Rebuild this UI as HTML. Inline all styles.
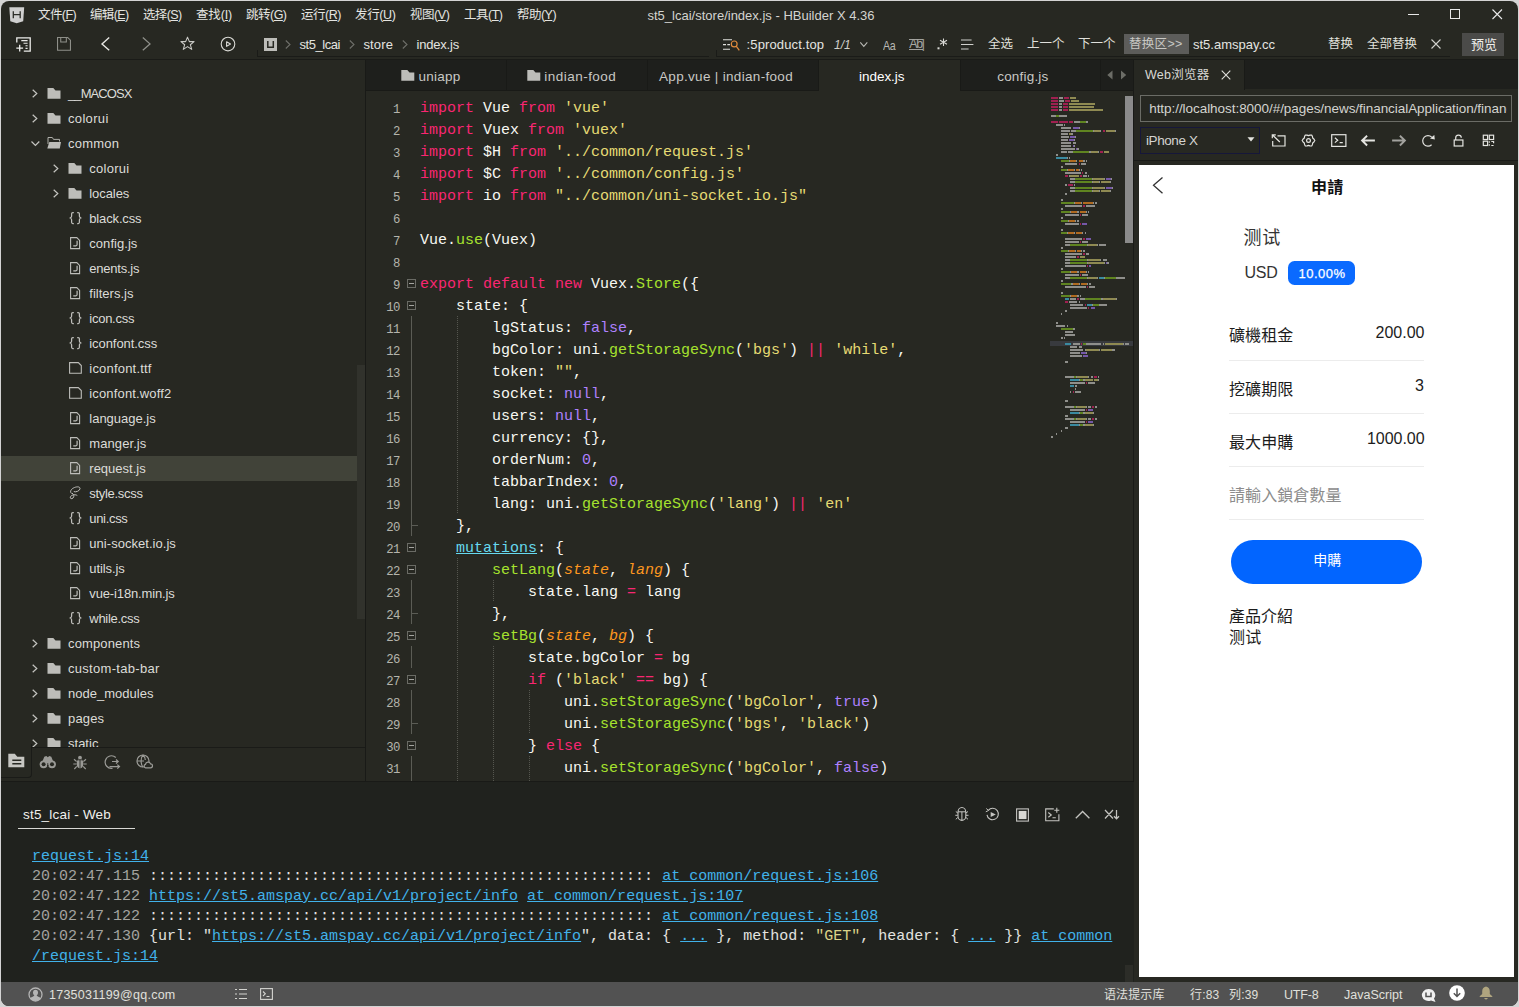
<!DOCTYPE html>
<html lang="zh"><head><meta charset="utf-8"><title>st5_lcai/store/index.js - HBuilder X 4.36</title>
<style>
*{box-sizing:border-box;margin:0;padding:0}
html,body{width:1519px;height:1007px;overflow:hidden;background:#d4d4d4}
body{font-family:"Liberation Sans","Noto Sans CJK SC",sans-serif;font-size:13px;color:#d4d4d0;position:relative}
.abs,.abs *{position:absolute}
#win{position:absolute;left:1px;top:1px;width:1517px;height:1004.5px;background:#272822;border-radius:8px;overflow:hidden}
.t{position:absolute;white-space:pre;line-height:1}
.ui{font-size:13px;color:#d6d6d2}
.mono{font-family:"Liberation Mono","DejaVu Sans Mono",monospace}
svg{position:absolute;overflow:visible}
</style></head>
<body>
<div id="win"><div style="position:absolute;left:-1px;top:-1px;width:1519px;height:1007px">
<div style="position:absolute;left:0px;top:59px;width:1519px;height:1px;background:#1a1b18;"></div>
<div style="position:absolute;left:366px;top:60px;width:768px;height:30px;background:#1e1f1c;"></div>
<div style="position:absolute;left:366px;top:90px;width:768px;height:1px;background:#191a17;"></div>
<div style="position:absolute;left:365px;top:60px;width:1px;height:722px;background:#191a17;"></div>
<div style="position:absolute;left:1133px;top:60px;width:1px;height:922px;background:#191a17;"></div>
<div style="position:absolute;left:1134px;top:60px;width:385px;height:30px;background:#1e1f1c;"></div>
<div style="position:absolute;left:0px;top:781px;width:1134px;height:1px;background:#191a17;"></div>
<div style="position:absolute;left:0px;top:782px;width:1134px;height:200px;background:#20221e;"></div>
<div style="position:absolute;left:0px;top:982px;width:1519px;height:25px;background:#525252;"></div>

<!-- sec_1_top.py -->
<svg style="left:9px;top:7px" width="16" height="17" viewBox="0 0 16 17"><path d="M0.300 0.300H15.200L14.200 14.300L7.700 16.300L1.300 14.300Z" fill="#cfcfcf"/><path d="M4.300 4.200V11.200M11.200 4.200V11.200M4.300 7.700H11.200" stroke="#2b2c27" stroke-width="1.300" fill="none"/></svg>
<div class="t " style="left:38px;top:9.2px;font-size:12.5px;height:12.5px;color:#e4e4e0;;letter-spacing:-0.597px;">文件(<span style="text-decoration:underline;position:static">F</span>)</div>
<div class="t " style="left:90px;top:9.2px;font-size:12.5px;height:12.5px;color:#e4e4e0;;letter-spacing:-0.637px;">编辑(<span style="text-decoration:underline;position:static">E</span>)</div>
<div class="t " style="left:143px;top:9.2px;font-size:12.5px;height:12.5px;color:#e4e4e0;;letter-spacing:-0.637px;">选择(<span style="text-decoration:underline;position:static">S</span>)</div>
<div class="t " style="left:196px;top:9.2px;font-size:12.5px;height:12.5px;color:#e4e4e0;;letter-spacing:-0.166px;">查找(<span style="text-decoration:underline;position:static">I</span>)</div>
<div class="t " style="left:246px;top:9.2px;font-size:12.5px;height:12.5px;color:#e4e4e0;;letter-spacing:-0.516px;">跳转(<span style="text-decoration:underline;position:static">G</span>)</div>
<div class="t " style="left:301px;top:9.2px;font-size:12.5px;height:12.5px;color:#e4e4e0;;letter-spacing:-0.475px;">运行(<span style="text-decoration:underline;position:static">R</span>)</div>
<div class="t " style="left:355px;top:9.2px;font-size:12.5px;height:12.5px;color:#e4e4e0;;letter-spacing:-0.375px;">发行(<span style="text-decoration:underline;position:static">U</span>)</div>
<div class="t " style="left:410px;top:9.2px;font-size:12.5px;height:12.5px;color:#e4e4e0;;letter-spacing:-0.438px;">视图(<span style="text-decoration:underline;position:static">V</span>)</div>
<div class="t " style="left:464px;top:9.2px;font-size:12.5px;height:12.5px;color:#e4e4e0;;letter-spacing:-0.497px;">工具(<span style="text-decoration:underline;position:static">T</span>)</div>
<div class="t " style="left:517px;top:9.2px;font-size:12.5px;height:12.5px;color:#e4e4e0;;letter-spacing:-0.537px;">帮助(<span style="text-decoration:underline;position:static">Y</span>)</div>
<div class="t " style="left:647.5px;top:8.5px;font-size:13px;height:13px;color:#d4d4d0;;letter-spacing:0.003px;">st5_lcai/store/index.js - HBuilder X 4.36</div>
<svg style="left:1408px;top:8px" width="12" height="12"><path d="M0 6.5H11" stroke="#e8e8e8" stroke-width="1"/></svg>
<svg style="left:1450px;top:9px" width="11" height="11"><rect x="0.5" y="0.5" width="9" height="9" fill="none" stroke="#e8e8e8" stroke-width="1"/></svg>
<svg style="left:1492px;top:9px" width="11" height="11"><path d="M0.5 0.5L10 10M10 0.5L0.5 10" stroke="#e8e8e8" stroke-width="1.1"/></svg>
<svg style="left:15.500px;top:36.500px" width="15" height="15" viewBox="0 0 15 15" fill="none" stroke="#ececea" stroke-width="1.300"><path d="M0.800 5.500V0.800H14.200V14.200H7.800"/><path d="M5.300 3.600H11.600M7.500 6.200H11.600M9.500 8.800H11.600M9.500 11.400H11.600" stroke-width="1.100"/><path d="M3.700 7.800V14.600M0.300 11.200H7.100"/></svg>
<svg style="left:57px;top:37.200px" width="14" height="13.800" viewBox="0 0 15 15" preserveAspectRatio="none" fill="none" stroke="#8e8f89" stroke-width="1.150"><path d="M0.600 0.600H11.500L14.400 3.500V14.400H0.600Z"/><path d="M4 0.600V5.500H10V0.600"/></svg>
<svg style="left:100.500px;top:37.200px" width="9" height="13.800" viewBox="0 0 9 14" preserveAspectRatio="none" fill="none" stroke="#e6e6e2" stroke-width="1.400"><path d="M8.200 0.500L1 7L8.200 13.500"/></svg>
<svg style="left:141.600px;top:37.200px" width="9" height="13.800" viewBox="0 0 9 14" preserveAspectRatio="none" fill="none" stroke="#8e8f89" stroke-width="1.300"><path d="M0.800 0.500L8 7L0.800 13.500"/></svg>
<svg style="left:179.500px;top:36px" width="15" height="15" viewBox="0 0 16 16" fill="none" stroke="#c8c8c4" stroke-width="1.150" stroke-linejoin="round"><path d="M8 1.200L10 6H15L11 9.300L12.500 14.300L8 11.300L3.500 14.300L5 9.300L1 6H6Z"/></svg>
<svg style="left:220px;top:36px" width="16" height="16" viewBox="0 0 16 16" fill="none" stroke="#d8d8d4" stroke-width="1.100"><circle cx="8" cy="8.050" r="6.800"/><path d="M6.600 5.700L10.500 8.050L6.600 10.400Z" stroke-linejoin="round"/></svg>
<div style="position:absolute;left:257px;top:50px;width:1px;height:7px;background:#1a1b18;"></div>
<div style="position:absolute;left:257px;top:56px;width:452px;height:1px;background:#1a1b18;"></div>
<svg style="left:264px;top:38px" width="13" height="13" viewBox="0 0 13 13"><rect x="0" y="0" width="13" height="13" fill="#bdbdb9"/><path d="M3.800 3V9.300H9.300V3" fill="none" stroke="#272822" stroke-width="1.5"/></svg>
<svg style="left:285px;top:40px" width="6" height="9" viewBox="0 0 6 9" fill="none" stroke="#6e6f69" stroke-width="1.1"><path d="M0.8 0.5L5 4.5L0.8 8.500"/></svg>
<svg style="left:349px;top:40px" width="6" height="9" viewBox="0 0 6 9" fill="none" stroke="#6e6f69" stroke-width="1.1"><path d="M0.8 0.5L5 4.5L0.8 8.500"/></svg>
<svg style="left:402px;top:40px" width="6" height="9" viewBox="0 0 6 9" fill="none" stroke="#6e6f69" stroke-width="1.1"><path d="M0.8 0.5L5 4.5L0.8 8.500"/></svg>
<div class="t " style="left:299.5px;top:37.7px;font-size:13px;height:13px;color:#e4e4e0;;letter-spacing:-0.447px;">st5_lcai</div>
<div class="t " style="left:363.5px;top:37.7px;font-size:13px;height:13px;color:#e4e4e0;;letter-spacing:0.119px;">store</div>
<div class="t " style="left:416.5px;top:37.7px;font-size:13px;height:13px;color:#e4e4e0;;letter-spacing:-0.197px;">index.js</div>
<div style="position:absolute;left:716px;top:50px;width:1px;height:7px;background:#1a1b18;"></div>
<div style="position:absolute;left:716px;top:56px;width:734px;height:1px;background:#1a1b18;"></div>
<svg style="left:722px;top:38px" width="18" height="13" viewBox="0 0 18 13" fill="none"><path d="M1 1.800H10M1 6.600H4M5.300 6.600H8M1 11.200H8" stroke="#e0e0dc" stroke-width="1.100"/><circle cx="12.200" cy="5.900" r="2.900" stroke="#e08a3c" stroke-width="1.200"/><path d="M14.200 8.200L17.300 12.300" stroke="#e08a3c" stroke-width="1.300"/></svg>
<div class="t " style="left:746.6px;top:38.0px;font-size:13px;height:13px;color:#e4e4e0;;letter-spacing:0.124px;">:5product.top</div>
<div class="t " style="left:834px;top:38.5px;font-size:12px;height:12px;color:#d0d0cc;font-style:italic;">1/1</div>
<svg style="left:859.800px;top:42px" width="8" height="5" viewBox="0 0 8 5" fill="none" stroke="#b8b8b4" stroke-width="1.100"><path d="M0.300 0.300L3.800 4.300L7.300 0.300"/></svg>
<div class="t " style="left:883px;top:38.5px;font-size:13px;height:13px;color:#b8b8b4;letter-spacing:-0.5px;transform:scaleX(.82);transform-origin:0 50%;">Aa</div>
<div style="position:absolute;left:909px;top:38.5px;width:13.5px;height:1px;background:#a0a09c;"></div>
<div style="position:absolute;left:909px;top:49px;width:13.5px;height:1px;background:#a0a09c;"></div>
<div class="t " style="left:909.3px;top:38.4px;font-size:12.3px;height:12.3px;color:#a8a8a4;letter-spacing:-1.250px;">Ab|</div>
<svg style="left:937px;top:38px" width="11" height="13" viewBox="0 0 11 13" fill="none" stroke="#d8d8d4" stroke-width="1.100"><path d="M6.500 0.500V8M3 2.300L10 6.200M10 2.300L3 6.200"/><rect x="0.500" y="9.300" width="2" height="2" fill="#d8d8d4" stroke="none"/></svg>
<svg style="left:961.200px;top:38.800px" width="14" height="11" viewBox="0 0 14 11" fill="none" stroke="#d0d0cc" stroke-width="1.200"><path d="M0 1H10.600M0 5.500H12.400M0 10H7.600"/></svg>
<div class="t " style="left:988px;top:38.2px;font-size:12.5px;height:12.5px;color:#e0e0dc;;">全选</div>
<div class="t " style="left:1027px;top:38.2px;font-size:12.5px;height:12.5px;color:#e0e0dc;;">上一个</div>
<div class="t " style="left:1078px;top:38.2px;font-size:12.5px;height:12.5px;color:#e0e0dc;;">下一个</div>
<div style="position:absolute;left:1124px;top:34px;width:65px;height:20px;background:#5c5c5a;"></div>
<div class="t " style="left:1129px;top:38.2px;font-size:12.5px;height:12.5px;color:#c8c8c4;letter-spacing:0.3px;">替换区&gt;&gt;</div>
<div class="t " style="left:1193px;top:38.0px;font-size:13px;height:13px;color:#e4e4e0;;">st5.amspay.cc</div>
<div class="t " style="left:1328px;top:38.2px;font-size:12.5px;height:12.5px;color:#e0e0dc;;">替换</div>
<div class="t " style="left:1367px;top:38.2px;font-size:12.5px;height:12.5px;color:#e0e0dc;;">全部替换</div>
<svg style="left:1431px;top:39px" width="10" height="10" viewBox="0 0 10 10"><path d="M0.5 0.5L9.500 9.500M9.500 0.5L0.5 9.500" stroke="#d0d0cc" stroke-width="1.1"/></svg>
<div style="position:absolute;left:1462px;top:33px;width:42px;height:23px;background:#4b4b49;"></div>
<div class="t " style="left:1471px;top:38.0px;font-size:13px;height:13px;color:#f0f0ec;;">预览</div>
<!-- sec_2_sidebar.py -->
<div style="position:absolute;left:1px;top:456px;width:356px;height:25px;background:#414339;"></div>
<div style="position:absolute;left:357px;top:365px;width:8px;height:254px;background:#31322c;"></div>
<div style="position:absolute;left:0;top:60px;width:365px;height:687px;overflow:hidden"><div style="position:absolute;left:0;top:-60px">
<svg style="left:32px;top:88.5px" width="6" height="9" viewBox="0 0 6 9" fill="none" stroke="#c4c4c0" stroke-width="1.2"><path d="M0.700 0.700L4.800 4.500L0.700 8.300"/></svg>
<svg style="left:47px;top:88.0px" width="14" height="11" viewBox="0 0 14 11"><path d="M0.500 0H6.300L8.500 2.400H13.500V10.800H0.500Z" fill="#bdbdb9"/></svg>
<div class="t " style="left:68px;top:87.0px;font-size:13px;height:13px;color:#dcdcd8;;letter-spacing:-0.902px;">__MACOSX</div>
<svg style="left:32px;top:113.5px" width="6" height="9" viewBox="0 0 6 9" fill="none" stroke="#c4c4c0" stroke-width="1.2"><path d="M0.700 0.700L4.800 4.500L0.700 8.300"/></svg>
<svg style="left:47px;top:113.0px" width="14" height="11" viewBox="0 0 14 11"><path d="M0.500 0H6.300L8.500 2.400H13.500V10.800H0.500Z" fill="#bdbdb9"/></svg>
<div class="t " style="left:68px;top:112.0px;font-size:13px;height:13px;color:#dcdcd8;;letter-spacing:0.329px;">colorui</div>
<svg style="left:31px;top:141.0px" width="9" height="6" viewBox="0 0 9 6" fill="none" stroke="#c4c4c0" stroke-width="1.2"><path d="M0.500 0.500L4.400 4.500L8.300 0.500"/></svg>
<svg style="left:46.5px;top:137px" width="15" height="12" viewBox="0 0 15 12"><path d="M1 7V0.500H5.300L6.500 2.400H12.500V4.500" fill="none" stroke="#bdbdb9" stroke-width="0.9"/><path d="M2.300 5H14L12.800 11.500H0.300Z" fill="#bdbdb9"/></svg>
<div class="t " style="left:68px;top:137.0px;font-size:13px;height:13px;color:#dcdcd8;;letter-spacing:0.240px;">common</div>
<svg style="left:53px;top:163.5px" width="6" height="9" viewBox="0 0 6 9" fill="none" stroke="#c4c4c0" stroke-width="1.2"><path d="M0.700 0.700L4.800 4.500L0.700 8.300"/></svg>
<svg style="left:68px;top:163.0px" width="14" height="11" viewBox="0 0 14 11"><path d="M0.500 0H6.300L8.500 2.400H13.500V10.800H0.500Z" fill="#bdbdb9"/></svg>
<div class="t " style="left:89.3px;top:162.0px;font-size:13px;height:13px;color:#dcdcd8;;letter-spacing:0.258px;">colorui</div>
<svg style="left:53px;top:188.5px" width="6" height="9" viewBox="0 0 6 9" fill="none" stroke="#c4c4c0" stroke-width="1.2"><path d="M0.700 0.700L4.800 4.500L0.700 8.300"/></svg>
<svg style="left:68px;top:188.0px" width="14" height="11" viewBox="0 0 14 11"><path d="M0.500 0H6.300L8.500 2.400H13.500V10.800H0.500Z" fill="#bdbdb9"/></svg>
<div class="t " style="left:89.3px;top:187.0px;font-size:13px;height:13px;color:#dcdcd8;;letter-spacing:-0.081px;">locales</div>
<svg style="left:68.5px;top:212px" width="13" height="12" viewBox="0 0 13 12" fill="none" stroke="#bdbdb9" stroke-width="1.250"><path d="M4.800 0.500H3.800Q2.600 0.500 2.600 1.700V4.300Q2.600 5.800 0.600 6Q2.600 6.200 2.600 7.700V10.300Q2.600 11.500 3.800 11.500H4.800"/><path d="M8.200 0.500H9.200Q10.400 0.500 10.400 1.700V4.300Q10.400 5.800 12.400 6Q10.400 6.200 10.400 7.700V10.300Q10.400 11.500 9.200 11.500H8.200"/></svg>
<div class="t " style="left:89.3px;top:212.0px;font-size:13px;height:13px;color:#dcdcd8;;letter-spacing:-0.152px;">black.css</div>
<svg style="left:69.5px;top:237.25px" width="11" height="13" viewBox="0 0 11 13" fill="none" stroke="#bdbdb9" stroke-width="1.100"><path d="M0.600 0.600H6.800L9.600 3.400V11.600H0.600Z"/><path d="M7.100 3.800V7.600Q7.100 8.800 5.900 8.800H3.300" stroke-width="1.200"/></svg>
<div class="t " style="left:89.3px;top:237.0px;font-size:13px;height:13px;color:#dcdcd8;;letter-spacing:0.044px;">config.js</div>
<svg style="left:69.5px;top:262.25px" width="11" height="13" viewBox="0 0 11 13" fill="none" stroke="#bdbdb9" stroke-width="1.100"><path d="M0.600 0.600H6.800L9.600 3.400V11.600H0.600Z"/><path d="M7.100 3.800V7.600Q7.100 8.800 5.900 8.800H3.300" stroke-width="1.200"/></svg>
<div class="t " style="left:89.3px;top:262.0px;font-size:13px;height:13px;color:#dcdcd8;;letter-spacing:-0.239px;">enents.js</div>
<svg style="left:69.5px;top:287.25px" width="11" height="13" viewBox="0 0 11 13" fill="none" stroke="#bdbdb9" stroke-width="1.100"><path d="M0.600 0.600H6.800L9.600 3.400V11.600H0.600Z"/><path d="M7.100 3.800V7.600Q7.100 8.800 5.900 8.800H3.300" stroke-width="1.200"/></svg>
<div class="t " style="left:89.3px;top:287.0px;font-size:13px;height:13px;color:#dcdcd8;;letter-spacing:0.014px;">filters.js</div>
<svg style="left:68.5px;top:312px" width="13" height="12" viewBox="0 0 13 12" fill="none" stroke="#bdbdb9" stroke-width="1.250"><path d="M4.800 0.500H3.800Q2.600 0.500 2.600 1.700V4.300Q2.600 5.800 0.600 6Q2.600 6.200 2.600 7.700V10.300Q2.600 11.500 3.800 11.500H4.800"/><path d="M8.200 0.500H9.200Q10.400 0.500 10.400 1.700V4.300Q10.400 5.800 12.400 6Q10.400 6.200 10.400 7.700V10.300Q10.400 11.500 9.200 11.500H8.200"/></svg>
<div class="t " style="left:89.3px;top:312.0px;font-size:13px;height:13px;color:#dcdcd8;;letter-spacing:-0.259px;">icon.css</div>
<svg style="left:68.5px;top:337px" width="13" height="12" viewBox="0 0 13 12" fill="none" stroke="#bdbdb9" stroke-width="1.250"><path d="M4.800 0.500H3.800Q2.600 0.500 2.600 1.700V4.300Q2.600 5.800 0.600 6Q2.600 6.200 2.600 7.700V10.300Q2.600 11.500 3.800 11.500H4.800"/><path d="M8.200 0.500H9.200Q10.400 0.500 10.400 1.700V4.300Q10.400 5.800 12.400 6Q10.400 6.200 10.400 7.700V10.300Q10.400 11.500 9.200 11.500H8.200"/></svg>
<div class="t " style="left:89.3px;top:337.0px;font-size:13px;height:13px;color:#dcdcd8;;letter-spacing:-0.071px;">iconfont.css</div>
<svg style="left:68.5px;top:362.2px" width="13" height="12" viewBox="0 0 13 12" fill="none" stroke="#bdbdb9" stroke-width="1.1"><path d="M0.600 0.600H9.300L12.300 3.600V11.300H0.600Z"/></svg>
<div class="t " style="left:89.3px;top:362.0px;font-size:13px;height:13px;color:#dcdcd8;;letter-spacing:0.201px;">iconfont.ttf</div>
<svg style="left:68.5px;top:387.2px" width="13" height="12" viewBox="0 0 13 12" fill="none" stroke="#bdbdb9" stroke-width="1.1"><path d="M0.600 0.600H9.300L12.300 3.600V11.300H0.600Z"/></svg>
<div class="t " style="left:89.3px;top:387.0px;font-size:13px;height:13px;color:#dcdcd8;;letter-spacing:0.151px;">iconfont.woff2</div>
<svg style="left:69.5px;top:412.25px" width="11" height="13" viewBox="0 0 11 13" fill="none" stroke="#bdbdb9" stroke-width="1.100"><path d="M0.600 0.600H6.800L9.600 3.400V11.600H0.600Z"/><path d="M7.100 3.800V7.600Q7.100 8.800 5.900 8.800H3.300" stroke-width="1.200"/></svg>
<div class="t " style="left:89.3px;top:412.0px;font-size:13px;height:13px;color:#dcdcd8;;letter-spacing:-0.009px;">language.js</div>
<svg style="left:69.5px;top:437.25px" width="11" height="13" viewBox="0 0 11 13" fill="none" stroke="#bdbdb9" stroke-width="1.100"><path d="M0.600 0.600H6.800L9.600 3.400V11.600H0.600Z"/><path d="M7.100 3.800V7.600Q7.100 8.800 5.900 8.800H3.300" stroke-width="1.200"/></svg>
<div class="t " style="left:89.3px;top:437.0px;font-size:13px;height:13px;color:#dcdcd8;;letter-spacing:0.081px;">manger.js</div>
<svg style="left:69.5px;top:462.25px" width="11" height="13" viewBox="0 0 11 13" fill="none" stroke="#bdbdb9" stroke-width="1.100"><path d="M0.600 0.600H6.800L9.600 3.400V11.600H0.600Z"/><path d="M7.100 3.800V7.600Q7.100 8.800 5.900 8.800H3.300" stroke-width="1.200"/></svg>
<div class="t " style="left:89.3px;top:462.0px;font-size:13px;height:13px;color:#dcdcd8;;letter-spacing:0.002px;">request.js</div>
<svg style="left:69px;top:486px" width="13" height="14" viewBox="0 0 13 14" fill="none" stroke="#bdbdb9" stroke-width="1"><path d="M2.500 7.500C0.500 5.500 2 3 5.500 1.500C8.500 0.300 11.300 0.800 11 2.800C10.700 4.800 7 6.500 4.800 5.600M3 7C5 8.500 5.500 10.500 4 12C2.800 13.200 1 12.800 1.300 11.200C1.700 9.300 5.500 7.800 8.300 9.500"/></svg>
<div class="t " style="left:89.3px;top:487.0px;font-size:13px;height:13px;color:#dcdcd8;;letter-spacing:-0.304px;">style.scss</div>
<svg style="left:68.5px;top:512px" width="13" height="12" viewBox="0 0 13 12" fill="none" stroke="#bdbdb9" stroke-width="1.250"><path d="M4.800 0.500H3.800Q2.600 0.500 2.600 1.700V4.300Q2.600 5.800 0.600 6Q2.600 6.200 2.600 7.700V10.300Q2.600 11.500 3.800 11.500H4.800"/><path d="M8.200 0.500H9.200Q10.400 0.500 10.400 1.700V4.300Q10.400 5.800 12.400 6Q10.400 6.200 10.400 7.700V10.300Q10.400 11.500 9.200 11.500H8.200"/></svg>
<div class="t " style="left:89.3px;top:512.0px;font-size:13px;height:13px;color:#dcdcd8;;letter-spacing:-0.324px;">uni.css</div>
<svg style="left:69.5px;top:537.25px" width="11" height="13" viewBox="0 0 11 13" fill="none" stroke="#bdbdb9" stroke-width="1.100"><path d="M0.600 0.600H6.800L9.600 3.400V11.600H0.600Z"/><path d="M7.100 3.800V7.600Q7.100 8.800 5.900 8.800H3.300" stroke-width="1.200"/></svg>
<div class="t " style="left:89.3px;top:537.0px;font-size:13px;height:13px;color:#dcdcd8;;letter-spacing:0.038px;">uni-socket.io.js</div>
<svg style="left:69.5px;top:562.25px" width="11" height="13" viewBox="0 0 11 13" fill="none" stroke="#bdbdb9" stroke-width="1.100"><path d="M0.600 0.600H6.800L9.600 3.400V11.600H0.600Z"/><path d="M7.100 3.800V7.600Q7.100 8.800 5.900 8.800H3.300" stroke-width="1.200"/></svg>
<div class="t " style="left:89.3px;top:562.0px;font-size:13px;height:13px;color:#dcdcd8;;letter-spacing:-0.078px;">utils.js</div>
<svg style="left:69.5px;top:587.25px" width="11" height="13" viewBox="0 0 11 13" fill="none" stroke="#bdbdb9" stroke-width="1.100"><path d="M0.600 0.600H6.800L9.600 3.400V11.600H0.600Z"/><path d="M7.100 3.800V7.600Q7.100 8.800 5.900 8.800H3.300" stroke-width="1.200"/></svg>
<div class="t " style="left:89.3px;top:587.0px;font-size:13px;height:13px;color:#dcdcd8;;letter-spacing:-0.136px;">vue-i18n.min.js</div>
<svg style="left:68.5px;top:612px" width="13" height="12" viewBox="0 0 13 12" fill="none" stroke="#bdbdb9" stroke-width="1.250"><path d="M4.800 0.500H3.800Q2.600 0.500 2.600 1.700V4.300Q2.600 5.800 0.600 6Q2.600 6.200 2.600 7.700V10.300Q2.600 11.500 3.800 11.500H4.800"/><path d="M8.200 0.500H9.200Q10.400 0.500 10.400 1.700V4.300Q10.400 5.800 12.400 6Q10.400 6.200 10.400 7.700V10.300Q10.400 11.500 9.200 11.500H8.200"/></svg>
<div class="t " style="left:89.3px;top:612.0px;font-size:13px;height:13px;color:#dcdcd8;;letter-spacing:-0.283px;">while.css</div>
<svg style="left:32px;top:638.5px" width="6" height="9" viewBox="0 0 6 9" fill="none" stroke="#c4c4c0" stroke-width="1.2"><path d="M0.700 0.700L4.800 4.500L0.700 8.300"/></svg>
<svg style="left:47px;top:638.0px" width="14" height="11" viewBox="0 0 14 11"><path d="M0.500 0H6.300L8.500 2.400H13.500V10.800H0.500Z" fill="#bdbdb9"/></svg>
<div class="t " style="left:68px;top:637.0px;font-size:13px;height:13px;color:#dcdcd8;;letter-spacing:0.137px;">components</div>
<svg style="left:32px;top:663.5px" width="6" height="9" viewBox="0 0 6 9" fill="none" stroke="#c4c4c0" stroke-width="1.2"><path d="M0.700 0.700L4.800 4.500L0.700 8.300"/></svg>
<svg style="left:47px;top:663.0px" width="14" height="11" viewBox="0 0 14 11"><path d="M0.500 0H6.300L8.500 2.400H13.500V10.800H0.500Z" fill="#bdbdb9"/></svg>
<div class="t " style="left:68px;top:662.0px;font-size:13px;height:13px;color:#dcdcd8;;letter-spacing:0.298px;">custom-tab-bar</div>
<svg style="left:32px;top:688.5px" width="6" height="9" viewBox="0 0 6 9" fill="none" stroke="#c4c4c0" stroke-width="1.2"><path d="M0.700 0.700L4.800 4.500L0.700 8.300"/></svg>
<svg style="left:47px;top:688.0px" width="14" height="11" viewBox="0 0 14 11"><path d="M0.500 0H6.300L8.500 2.400H13.500V10.800H0.500Z" fill="#bdbdb9"/></svg>
<div class="t " style="left:68px;top:687.0px;font-size:13px;height:13px;color:#dcdcd8;;letter-spacing:0.009px;">node_modules</div>
<svg style="left:32px;top:713.5px" width="6" height="9" viewBox="0 0 6 9" fill="none" stroke="#c4c4c0" stroke-width="1.2"><path d="M0.700 0.700L4.800 4.500L0.700 8.300"/></svg>
<svg style="left:47px;top:713.0px" width="14" height="11" viewBox="0 0 14 11"><path d="M0.500 0H6.300L8.500 2.400H13.500V10.800H0.500Z" fill="#bdbdb9"/></svg>
<div class="t " style="left:68px;top:712.0px;font-size:13px;height:13px;color:#dcdcd8;;letter-spacing:0.156px;">pages</div>
<svg style="left:32px;top:738.5px" width="6" height="9" viewBox="0 0 6 9" fill="none" stroke="#c4c4c0" stroke-width="1.2"><path d="M0.700 0.700L4.800 4.500L0.700 8.300"/></svg>
<svg style="left:47px;top:738.0px" width="14" height="11" viewBox="0 0 14 11"><path d="M0.500 0H6.300L8.500 2.400H13.500V10.800H0.500Z" fill="#bdbdb9"/></svg>
<div class="t " style="left:68px;top:737.0px;font-size:13px;height:13px;color:#dcdcd8;;letter-spacing:0.009px;">static</div>
</div></div>
<div style="position:absolute;left:0px;top:747px;width:365px;height:1px;background:#1a1b18;"></div>
<div style="position:absolute;left:0px;top:748px;width:365px;height:33px;background:#272822;"></div>
<div style="position:absolute;left:1px;top:744px;width:31px;height:34px;background:#272822;border-right:1px solid #1a1b18;border-bottom:1px solid #1a1b18;border-radius:0 0 4px 0"></div>
<svg style="left:8px;top:753px" width="17" height="15" viewBox="0 0 17 15"><path d="M0.300 0.800H6.800L9.300 3.800H16.300V14.300H0.300Z" fill="#c6c6c2"/><path d="M4.300 7.300H13.300M4.300 10.800H13.300" stroke="#272822" stroke-width="1.5"/></svg>
<svg style="left:39px;top:755px" width="18" height="14" viewBox="0 0 18 14"><path d="M5.300 1.800L7.300 1L8.800 2.200L10.300 1L12.300 1.800L14.800 8H2.800Z" fill="#9a9a96"/><circle cx="4.600" cy="9.300" r="3.900" fill="#9a9a96"/><circle cx="13" cy="9.300" r="3.900" fill="#9a9a96"/><circle cx="4.600" cy="9.300" r="2" fill="#272822"/><circle cx="13" cy="9.300" r="2" fill="#272822"/><rect x="8.100" y="9.600" width="1.400" height="1.400" fill="#272822"/></svg>
<svg style="left:72px;top:754px" width="16" height="16" viewBox="0 0 16 16" fill="none" stroke="#9a9a96" stroke-width="1.150"><circle cx="8" cy="3.700" r="1.900" fill="#9a9a96" stroke="none"/><ellipse cx="8" cy="9.500" rx="3.300" ry="4.700" fill="#9a9a96" stroke="none"/><path d="M8 5.500V14" stroke="#272822" stroke-width="0.900"/><path d="M4.800 5.800H11.200" stroke="#272822" stroke-width="0.900"/><path d="M4.600 7.500L2 5.300M4.500 10H1.300M4.800 12.300L2.300 15M11.400 7.500L14 5.300M11.500 10H14.700M11.200 12.300L13.700 15"/></svg>
<svg style="left:104px;top:754px" width="17" height="15" viewBox="0 0 17 15" fill="none" stroke="#9a9a96" stroke-width="1.200"><path d="M11.800 3.500A6.300 6.300 0 1 0 8.500 14.300"/><path d="M8 7.500H14M12 5.500L14.200 7.500L12 9.500M5.500 12.600H15.300M13.300 10.600L15.500 12.600L13.300 14.600"/></svg>
<svg style="left:136px;top:754px" width="17" height="15" viewBox="0 0 17 15" fill="none" stroke="#9a9a96" stroke-width="1.2"><circle cx="7" cy="7" r="6"/><path d="M1 7H8M7 1C4.500 3.500 4.500 10.500 7 13M7 1C8.500 2.500 9.300 4.500 9.300 6"/><path d="M9.500 13.800H14.500A2 2 0 0 0 14.500 9.800A2.600 2.600 0 0 0 9.500 10.300A1.800 1.800 0 0 0 9.500 13.800Z" fill="#272822"/></svg>
<!-- sec_3_editor.py -->
<div style="position:absolute;left:506px;top:60px;width:1px;height:30px;background:#191a17;"></div>
<div style="position:absolute;left:647px;top:60px;width:1px;height:30px;background:#191a17;"></div>
<div style="position:absolute;left:818px;top:60px;width:1px;height:30px;background:#191a17;"></div>
<div style="position:absolute;left:1100px;top:60px;width:1px;height:30px;background:#191a17;"></div>
<div style="position:absolute;left:819px;top:60px;width:141px;height:31px;background:#272822;"></div>
<div style="position:absolute;left:960px;top:60px;width:1px;height:30px;background:#191a17;"></div>
<svg style="left:401px;top:70.0px" width="14" height="11" viewBox="0 0 14 11"><path d="M0.300 0H6.300L8.500 2.400H13.300V10.800H0.300Z" fill="#bdbdb9"/></svg>
<div class="t " style="left:418.5px;top:70.0px;font-size:13.5px;height:13.5px;color:#c8c8c4;;letter-spacing:0.242px;">uniapp</div>
<svg style="left:527px;top:70.0px" width="14" height="11" viewBox="0 0 14 11"><path d="M0.300 0H6.300L8.500 2.400H13.300V10.800H0.300Z" fill="#bdbdb9"/></svg>
<div class="t " style="left:544.3px;top:70.0px;font-size:13.5px;height:13.5px;color:#c8c8c4;;letter-spacing:0.472px;">indian-food</div>
<div class="t " style="left:659px;top:70.0px;font-size:13.5px;height:13.5px;color:#c8c8c4;;letter-spacing:0.316px;">App.vue | indian-food</div>
<div class="t " style="left:859px;top:70.0px;font-size:13.5px;height:13.5px;color:#ffffff;;letter-spacing:-0.035px;">index.js</div>
<div class="t " style="left:997.2px;top:70.0px;font-size:13.5px;height:13.5px;color:#c8c8c4;;letter-spacing:0.197px;">config.js</div>
<svg style="left:1107px;top:70px" width="20" height="10" viewBox="0 0 20 10"><path d="M5.500 0.500V9.500L0.300 5Z M14 0.500V9.500L19.200 5Z" fill="#6c6d67"/></svg>
<div style="position:absolute;left:366px;top:91px;width:767px;height:690px;overflow:hidden"><div style="position:absolute;left:-366px;top:-91px">
<div style="position:absolute;left:457px;top:316px;width:1px;height:198px;background:repeating-linear-gradient(to bottom,#55564f 0 1px,transparent 1px 2px)"></div>
<div style="position:absolute;left:457px;top:558px;width:1px;height:242px;background:repeating-linear-gradient(to bottom,#55564f 0 1px,transparent 1px 2px)"></div>
<div style="position:absolute;left:493px;top:580px;width:1px;height:22px;background:repeating-linear-gradient(to bottom,#55564f 0 1px,transparent 1px 2px)"></div>
<div style="position:absolute;left:493px;top:646px;width:1px;height:154px;background:repeating-linear-gradient(to bottom,#55564f 0 1px,transparent 1px 2px)"></div>
<div style="position:absolute;left:529px;top:690px;width:1px;height:44px;background:repeating-linear-gradient(to bottom,#55564f 0 1px,transparent 1px 2px)"></div>
<div style="position:absolute;left:529px;top:756px;width:1px;height:44px;background:repeating-linear-gradient(to bottom,#55564f 0 1px,transparent 1px 2px)"></div>
<div style="position:absolute;left:411px;top:316px;width:1px;height:22px;background:#5b5c55;"></div>
<div style="position:absolute;left:411px;top:338px;width:1px;height:22px;background:#5b5c55;"></div>
<div style="position:absolute;left:411px;top:360px;width:1px;height:22px;background:#5b5c55;"></div>
<div style="position:absolute;left:411px;top:382px;width:1px;height:22px;background:#5b5c55;"></div>
<div style="position:absolute;left:411px;top:404px;width:1px;height:22px;background:#5b5c55;"></div>
<div style="position:absolute;left:411px;top:426px;width:1px;height:22px;background:#5b5c55;"></div>
<div style="position:absolute;left:411px;top:448px;width:1px;height:22px;background:#5b5c55;"></div>
<div style="position:absolute;left:411px;top:470px;width:1px;height:22px;background:#5b5c55;"></div>
<div style="position:absolute;left:411px;top:492px;width:1px;height:22px;background:#5b5c55;"></div>
<div style="position:absolute;left:411px;top:514px;width:1px;height:22px;background:#5b5c55;"></div>
<div style="position:absolute;left:411px;top:580px;width:1px;height:22px;background:#5b5c55;"></div>
<div style="position:absolute;left:411px;top:602px;width:1px;height:22px;background:#5b5c55;"></div>
<div style="position:absolute;left:411px;top:646px;width:1px;height:22px;background:#5b5c55;"></div>
<div style="position:absolute;left:411px;top:690px;width:1px;height:22px;background:#5b5c55;"></div>
<div style="position:absolute;left:411px;top:712px;width:1px;height:22px;background:#5b5c55;"></div>
<div style="position:absolute;left:411px;top:756px;width:1px;height:22px;background:#5b5c55;"></div>
<div style="position:absolute;left:411px;top:778px;width:1px;height:22px;background:#5b5c55;"></div>
<div style="position:absolute;left:407px;top:279px;width:9px;height:9px;border:1px solid #6a6b65;background:#272822"></div>
<div style="position:absolute;left:409px;top:283px;width:5px;height:1px;background:#a4a4a0;"></div>
<div style="position:absolute;left:407px;top:301px;width:9px;height:9px;border:1px solid #6a6b65;background:#272822"></div>
<div style="position:absolute;left:409px;top:305px;width:5px;height:1px;background:#a4a4a0;"></div>
<div style="position:absolute;left:407px;top:543px;width:9px;height:9px;border:1px solid #6a6b65;background:#272822"></div>
<div style="position:absolute;left:409px;top:547px;width:5px;height:1px;background:#a4a4a0;"></div>
<div style="position:absolute;left:407px;top:565px;width:9px;height:9px;border:1px solid #6a6b65;background:#272822"></div>
<div style="position:absolute;left:409px;top:569px;width:5px;height:1px;background:#a4a4a0;"></div>
<div style="position:absolute;left:407px;top:631px;width:9px;height:9px;border:1px solid #6a6b65;background:#272822"></div>
<div style="position:absolute;left:409px;top:635px;width:5px;height:1px;background:#a4a4a0;"></div>
<div style="position:absolute;left:407px;top:675px;width:9px;height:9px;border:1px solid #6a6b65;background:#272822"></div>
<div style="position:absolute;left:409px;top:679px;width:5px;height:1px;background:#a4a4a0;"></div>
<div style="position:absolute;left:407px;top:741px;width:9px;height:9px;border:1px solid #6a6b65;background:#272822"></div>
<div style="position:absolute;left:409px;top:745px;width:5px;height:1px;background:#a4a4a0;"></div>
<div style="position:absolute;left:412px;top:525px;width:6px;height:1px;background:#5b5c55;"></div>
<div style="position:absolute;left:412px;top:613px;width:6px;height:1px;background:#5b5c55;"></div>
<div style="position:absolute;left:412px;top:723px;width:6px;height:1px;background:#5b5c55;"></div>
<div class="t mono" style="left:372px;width:28px;text-align:right;top:103.7px;font-size:12.300px;height:12px;letter-spacing:-0.450px;color:#b4b4ac">1</div>
<div class="t mono" style="left:420px;top:100px;font-size:15px;height:18px;line-height:18px;color:#f8f8f2"><span style="position:static;color:#f92672">import</span> Vue <span style="position:static;color:#f92672">from</span> <span style="position:static;color:#e6db74">&#x27;vue&#x27;</span></div>
<div class="t mono" style="left:372px;width:28px;text-align:right;top:125.7px;font-size:12.300px;height:12px;letter-spacing:-0.450px;color:#b4b4ac">2</div>
<div class="t mono" style="left:420px;top:122px;font-size:15px;height:18px;line-height:18px;color:#f8f8f2"><span style="position:static;color:#f92672">import</span> Vuex <span style="position:static;color:#f92672">from</span> <span style="position:static;color:#e6db74">&#x27;vuex&#x27;</span></div>
<div class="t mono" style="left:372px;width:28px;text-align:right;top:147.7px;font-size:12.300px;height:12px;letter-spacing:-0.450px;color:#b4b4ac">3</div>
<div class="t mono" style="left:420px;top:144px;font-size:15px;height:18px;line-height:18px;color:#f8f8f2"><span style="position:static;color:#f92672">import</span> $H <span style="position:static;color:#f92672">from</span> <span style="position:static;color:#e6db74">&#x27;../common/request.js&#x27;</span></div>
<div class="t mono" style="left:372px;width:28px;text-align:right;top:169.7px;font-size:12.300px;height:12px;letter-spacing:-0.450px;color:#b4b4ac">4</div>
<div class="t mono" style="left:420px;top:166px;font-size:15px;height:18px;line-height:18px;color:#f8f8f2"><span style="position:static;color:#f92672">import</span> $C <span style="position:static;color:#f92672">from</span> <span style="position:static;color:#e6db74">&#x27;../common/config.js&#x27;</span></div>
<div class="t mono" style="left:372px;width:28px;text-align:right;top:191.7px;font-size:12.300px;height:12px;letter-spacing:-0.450px;color:#b4b4ac">5</div>
<div class="t mono" style="left:420px;top:188px;font-size:15px;height:18px;line-height:18px;color:#f8f8f2"><span style="position:static;color:#f92672">import</span> io <span style="position:static;color:#f92672">from</span> <span style="position:static;color:#e6db74">&quot;../common/uni-socket.io.js&quot;</span></div>
<div class="t mono" style="left:372px;width:28px;text-align:right;top:213.7px;font-size:12.300px;height:12px;letter-spacing:-0.450px;color:#b4b4ac">6</div>
<div class="t mono" style="left:372px;width:28px;text-align:right;top:235.7px;font-size:12.300px;height:12px;letter-spacing:-0.450px;color:#b4b4ac">7</div>
<div class="t mono" style="left:420px;top:232px;font-size:15px;height:18px;line-height:18px;color:#f8f8f2">Vue.<span style="position:static;color:#a6e22e">use</span>(Vuex)</div>
<div class="t mono" style="left:372px;width:28px;text-align:right;top:257.7px;font-size:12.300px;height:12px;letter-spacing:-0.450px;color:#b4b4ac">8</div>
<div class="t mono" style="left:372px;width:28px;text-align:right;top:279.7px;font-size:12.300px;height:12px;letter-spacing:-0.450px;color:#b4b4ac">9</div>
<div class="t mono" style="left:420px;top:276px;font-size:15px;height:18px;line-height:18px;color:#f8f8f2"><span style="position:static;color:#f92672">export</span> <span style="position:static;color:#f92672">default</span> <span style="position:static;color:#f92672">new</span> Vuex.<span style="position:static;color:#a6e22e">Store</span>({</div>
<div class="t mono" style="left:372px;width:28px;text-align:right;top:301.7px;font-size:12.300px;height:12px;letter-spacing:-0.450px;color:#b4b4ac">10</div>
<div class="t mono" style="left:420px;top:298px;font-size:15px;height:18px;line-height:18px;color:#f8f8f2">    state: {</div>
<div class="t mono" style="left:372px;width:28px;text-align:right;top:323.7px;font-size:12.300px;height:12px;letter-spacing:-0.450px;color:#b4b4ac">11</div>
<div class="t mono" style="left:420px;top:320px;font-size:15px;height:18px;line-height:18px;color:#f8f8f2">        lgStatus: <span style="position:static;color:#ae81ff">false</span>,</div>
<div class="t mono" style="left:372px;width:28px;text-align:right;top:345.7px;font-size:12.300px;height:12px;letter-spacing:-0.450px;color:#b4b4ac">12</div>
<div class="t mono" style="left:420px;top:342px;font-size:15px;height:18px;line-height:18px;color:#f8f8f2">        bgColor: uni.<span style="position:static;color:#a6e22e">getStorageSync</span>(<span style="position:static;color:#e6db74">&#x27;bgs&#x27;</span>) <span style="position:static;color:#f92672">||</span> <span style="position:static;color:#e6db74">&#x27;while&#x27;</span>,</div>
<div class="t mono" style="left:372px;width:28px;text-align:right;top:367.7px;font-size:12.300px;height:12px;letter-spacing:-0.450px;color:#b4b4ac">13</div>
<div class="t mono" style="left:420px;top:364px;font-size:15px;height:18px;line-height:18px;color:#f8f8f2">        token: <span style="position:static;color:#e6db74">&quot;&quot;</span>,</div>
<div class="t mono" style="left:372px;width:28px;text-align:right;top:389.7px;font-size:12.300px;height:12px;letter-spacing:-0.450px;color:#b4b4ac">14</div>
<div class="t mono" style="left:420px;top:386px;font-size:15px;height:18px;line-height:18px;color:#f8f8f2">        socket: <span style="position:static;color:#ae81ff">null</span>,</div>
<div class="t mono" style="left:372px;width:28px;text-align:right;top:411.7px;font-size:12.300px;height:12px;letter-spacing:-0.450px;color:#b4b4ac">15</div>
<div class="t mono" style="left:420px;top:408px;font-size:15px;height:18px;line-height:18px;color:#f8f8f2">        users: <span style="position:static;color:#ae81ff">null</span>,</div>
<div class="t mono" style="left:372px;width:28px;text-align:right;top:433.7px;font-size:12.300px;height:12px;letter-spacing:-0.450px;color:#b4b4ac">16</div>
<div class="t mono" style="left:420px;top:430px;font-size:15px;height:18px;line-height:18px;color:#f8f8f2">        currency: {},</div>
<div class="t mono" style="left:372px;width:28px;text-align:right;top:455.7px;font-size:12.300px;height:12px;letter-spacing:-0.450px;color:#b4b4ac">17</div>
<div class="t mono" style="left:420px;top:452px;font-size:15px;height:18px;line-height:18px;color:#f8f8f2">        orderNum: <span style="position:static;color:#ae81ff">0</span>,</div>
<div class="t mono" style="left:372px;width:28px;text-align:right;top:477.7px;font-size:12.300px;height:12px;letter-spacing:-0.450px;color:#b4b4ac">18</div>
<div class="t mono" style="left:420px;top:474px;font-size:15px;height:18px;line-height:18px;color:#f8f8f2">        tabbarIndex: <span style="position:static;color:#ae81ff">0</span>,</div>
<div class="t mono" style="left:372px;width:28px;text-align:right;top:499.7px;font-size:12.300px;height:12px;letter-spacing:-0.450px;color:#b4b4ac">19</div>
<div class="t mono" style="left:420px;top:496px;font-size:15px;height:18px;line-height:18px;color:#f8f8f2">        lang: uni.<span style="position:static;color:#a6e22e">getStorageSync</span>(<span style="position:static;color:#e6db74">&#x27;lang&#x27;</span>) <span style="position:static;color:#f92672">||</span> <span style="position:static;color:#e6db74">&#x27;en&#x27;</span></div>
<div class="t mono" style="left:372px;width:28px;text-align:right;top:521.7px;font-size:12.300px;height:12px;letter-spacing:-0.450px;color:#b4b4ac">20</div>
<div class="t mono" style="left:420px;top:518px;font-size:15px;height:18px;line-height:18px;color:#f8f8f2">    },</div>
<div class="t mono" style="left:372px;width:28px;text-align:right;top:543.7px;font-size:12.300px;height:12px;letter-spacing:-0.450px;color:#b4b4ac">21</div>
<div class="t mono" style="left:420px;top:540px;font-size:15px;height:18px;line-height:18px;color:#f8f8f2">    <span style="position:static;color:#66d9ef;text-decoration:underline">mutations</span>: {</div>
<div class="t mono" style="left:372px;width:28px;text-align:right;top:565.7px;font-size:12.300px;height:12px;letter-spacing:-0.450px;color:#b4b4ac">22</div>
<div class="t mono" style="left:420px;top:562px;font-size:15px;height:18px;line-height:18px;color:#f8f8f2">        <span style="position:static;color:#a6e22e">setLang</span>(<span style="position:static;color:#fd971f;font-style:italic">state</span>, <span style="position:static;color:#fd971f;font-style:italic">lang</span>) {</div>
<div class="t mono" style="left:372px;width:28px;text-align:right;top:587.7px;font-size:12.300px;height:12px;letter-spacing:-0.450px;color:#b4b4ac">23</div>
<div class="t mono" style="left:420px;top:584px;font-size:15px;height:18px;line-height:18px;color:#f8f8f2">            state.lang <span style="position:static;color:#f92672">=</span> lang</div>
<div class="t mono" style="left:372px;width:28px;text-align:right;top:609.7px;font-size:12.300px;height:12px;letter-spacing:-0.450px;color:#b4b4ac">24</div>
<div class="t mono" style="left:420px;top:606px;font-size:15px;height:18px;line-height:18px;color:#f8f8f2">        },</div>
<div class="t mono" style="left:372px;width:28px;text-align:right;top:631.7px;font-size:12.300px;height:12px;letter-spacing:-0.450px;color:#b4b4ac">25</div>
<div class="t mono" style="left:420px;top:628px;font-size:15px;height:18px;line-height:18px;color:#f8f8f2">        <span style="position:static;color:#a6e22e">setBg</span>(<span style="position:static;color:#fd971f;font-style:italic">state</span>, <span style="position:static;color:#fd971f;font-style:italic">bg</span>) {</div>
<div class="t mono" style="left:372px;width:28px;text-align:right;top:653.7px;font-size:12.300px;height:12px;letter-spacing:-0.450px;color:#b4b4ac">26</div>
<div class="t mono" style="left:420px;top:650px;font-size:15px;height:18px;line-height:18px;color:#f8f8f2">            state.bgColor <span style="position:static;color:#f92672">=</span> bg</div>
<div class="t mono" style="left:372px;width:28px;text-align:right;top:675.7px;font-size:12.300px;height:12px;letter-spacing:-0.450px;color:#b4b4ac">27</div>
<div class="t mono" style="left:420px;top:672px;font-size:15px;height:18px;line-height:18px;color:#f8f8f2">            <span style="position:static;color:#f92672">if</span> (<span style="position:static;color:#e6db74">&#x27;black&#x27;</span> <span style="position:static;color:#f92672">==</span> bg) {</div>
<div class="t mono" style="left:372px;width:28px;text-align:right;top:697.7px;font-size:12.300px;height:12px;letter-spacing:-0.450px;color:#b4b4ac">28</div>
<div class="t mono" style="left:420px;top:694px;font-size:15px;height:18px;line-height:18px;color:#f8f8f2">                uni.<span style="position:static;color:#a6e22e">setStorageSync</span>(<span style="position:static;color:#e6db74">&#x27;bgColor&#x27;</span>, <span style="position:static;color:#ae81ff">true</span>)</div>
<div class="t mono" style="left:372px;width:28px;text-align:right;top:719.7px;font-size:12.300px;height:12px;letter-spacing:-0.450px;color:#b4b4ac">29</div>
<div class="t mono" style="left:420px;top:716px;font-size:15px;height:18px;line-height:18px;color:#f8f8f2">                uni.<span style="position:static;color:#a6e22e">setStorageSync</span>(<span style="position:static;color:#e6db74">&#x27;bgs&#x27;</span>, <span style="position:static;color:#e6db74">&#x27;black&#x27;</span>)</div>
<div class="t mono" style="left:372px;width:28px;text-align:right;top:741.7px;font-size:12.300px;height:12px;letter-spacing:-0.450px;color:#b4b4ac">30</div>
<div class="t mono" style="left:420px;top:738px;font-size:15px;height:18px;line-height:18px;color:#f8f8f2">            } <span style="position:static;color:#f92672">else</span> {</div>
<div class="t mono" style="left:372px;width:28px;text-align:right;top:763.7px;font-size:12.300px;height:12px;letter-spacing:-0.450px;color:#b4b4ac">31</div>
<div class="t mono" style="left:420px;top:760px;font-size:15px;height:18px;line-height:18px;color:#f8f8f2">                uni.<span style="position:static;color:#a6e22e">setStorageSync</span>(<span style="position:static;color:#e6db74">&#x27;bgColor&#x27;</span>, <span style="position:static;color:#ae81ff">false</span>)</div>
<div class="t mono" style="left:372px;width:28px;text-align:right;top:785.7px;font-size:12.300px;height:12px;letter-spacing:-0.450px;color:#b4b4ac">32</div>
<div class="t mono" style="left:420px;top:782px;font-size:15px;height:18px;line-height:18px;color:#f8f8f2">                uni.<span style="position:static;color:#a6e22e">setStorageSync</span>(<span style="position:static;color:#e6db74">&#x27;bgs&#x27;</span>, <span style="position:static;color:#e6db74">&#x27;while&#x27;</span>)</div>
</div></div>
<div style="position:absolute;left:1050px;top:341px;width:83px;height:5px;background:#383a3e;"></div>
<svg style="left:0;top:0" width="1134" height="460" viewBox="0 0 1134 460" shape-rendering="crispEdges"><rect x="1051.0" y="96.5" width="7.2" height="2" fill="#a02050"/><rect x="1059.4" y="96.5" width="3.6" height="2" fill="#8f8f8b"/><rect x="1064.2" y="96.5" width="4.8" height="2" fill="#a02050"/><rect x="1070.2" y="96.5" width="6.0" height="2" fill="#8f8a52"/><rect x="1051.0" y="99.5" width="7.2" height="2" fill="#a02050"/><rect x="1059.4" y="99.5" width="4.8" height="2" fill="#8f8f8b"/><rect x="1065.4" y="99.5" width="4.8" height="2" fill="#a02050"/><rect x="1071.4" y="99.5" width="7.2" height="2" fill="#8f8a52"/><rect x="1051.0" y="102.5" width="7.2" height="2" fill="#a02050"/><rect x="1059.4" y="102.5" width="2.4" height="2" fill="#8f8f8b"/><rect x="1063.0" y="102.5" width="4.8" height="2" fill="#a02050"/><rect x="1069.0" y="102.5" width="26.4" height="2" fill="#8f8a52"/><rect x="1051.0" y="105.5" width="7.2" height="2" fill="#a02050"/><rect x="1059.4" y="105.5" width="2.4" height="2" fill="#8f8f8b"/><rect x="1063.0" y="105.5" width="4.8" height="2" fill="#a02050"/><rect x="1069.0" y="105.5" width="25.2" height="2" fill="#8f8a52"/><rect x="1051.0" y="108.5" width="7.2" height="2" fill="#a02050"/><rect x="1059.4" y="108.5" width="2.4" height="2" fill="#8f8f8b"/><rect x="1063.0" y="108.5" width="4.8" height="2" fill="#a02050"/><rect x="1069.0" y="108.5" width="33.6" height="2" fill="#8f8a52"/><rect x="1051.0" y="114.5" width="4.8" height="2" fill="#8f8f8b"/><rect x="1055.8" y="114.5" width="3.6" height="2" fill="#5f8420"/><rect x="1059.4" y="114.5" width="7.2" height="2" fill="#8f8f8b"/><rect x="1051.0" y="120.5" width="7.2" height="2" fill="#a02050"/><rect x="1059.4" y="120.5" width="8.4" height="2" fill="#a02050"/><rect x="1069.0" y="120.5" width="3.6" height="2" fill="#a02050"/><rect x="1073.8" y="120.5" width="6.0" height="2" fill="#8f8f8b"/><rect x="1079.8" y="120.5" width="6.0" height="2" fill="#5f8420"/><rect x="1085.8" y="120.5" width="2.4" height="2" fill="#8f8f8b"/><rect x="1055.8" y="123.5" width="7.2" height="2" fill="#8f8f8b"/><rect x="1064.2" y="123.5" width="1.2" height="2" fill="#8f8f8b"/><rect x="1060.6" y="126.5" width="10.8" height="2" fill="#8f8f8b"/><rect x="1072.6" y="126.5" width="6.0" height="2" fill="#7558a8"/><rect x="1078.6" y="126.5" width="1.2" height="2" fill="#8f8f8b"/><rect x="1060.6" y="129.5" width="9.6" height="2" fill="#8f8f8b"/><rect x="1071.4" y="129.5" width="4.8" height="2" fill="#8f8f8b"/><rect x="1076.2" y="129.5" width="16.8" height="2" fill="#5f8420"/><rect x="1093.0" y="129.5" width="1.2" height="2" fill="#8f8f8b"/><rect x="1094.2" y="129.5" width="6.0" height="2" fill="#8f8a52"/><rect x="1100.2" y="129.5" width="1.2" height="2" fill="#8f8f8b"/><rect x="1102.6" y="129.5" width="2.4" height="2" fill="#a02050"/><rect x="1106.2" y="129.5" width="8.4" height="2" fill="#8f8a52"/><rect x="1114.6" y="129.5" width="1.2" height="2" fill="#8f8f8b"/><rect x="1060.6" y="132.5" width="7.2" height="2" fill="#8f8f8b"/><rect x="1069.0" y="132.5" width="2.4" height="2" fill="#8f8a52"/><rect x="1071.4" y="132.5" width="1.2" height="2" fill="#8f8f8b"/><rect x="1060.6" y="135.5" width="8.4" height="2" fill="#8f8f8b"/><rect x="1070.2" y="135.5" width="4.8" height="2" fill="#7558a8"/><rect x="1075.0" y="135.5" width="1.2" height="2" fill="#8f8f8b"/><rect x="1060.6" y="138.5" width="7.2" height="2" fill="#8f8f8b"/><rect x="1069.0" y="138.5" width="4.8" height="2" fill="#7558a8"/><rect x="1073.8" y="138.5" width="1.2" height="2" fill="#8f8f8b"/><rect x="1060.6" y="141.5" width="10.8" height="2" fill="#8f8f8b"/><rect x="1072.6" y="141.5" width="3.6" height="2" fill="#8f8f8b"/><rect x="1060.6" y="144.5" width="10.8" height="2" fill="#8f8f8b"/><rect x="1072.6" y="144.5" width="1.2" height="2" fill="#7558a8"/><rect x="1073.8" y="144.5" width="1.2" height="2" fill="#8f8f8b"/><rect x="1060.6" y="147.5" width="14.4" height="2" fill="#8f8f8b"/><rect x="1076.2" y="147.5" width="1.2" height="2" fill="#7558a8"/><rect x="1077.4" y="147.5" width="1.2" height="2" fill="#8f8f8b"/><rect x="1060.6" y="150.5" width="6.0" height="2" fill="#8f8f8b"/><rect x="1067.8" y="150.5" width="4.8" height="2" fill="#8f8f8b"/><rect x="1072.6" y="150.5" width="16.8" height="2" fill="#5f8420"/><rect x="1089.4" y="150.5" width="1.2" height="2" fill="#8f8f8b"/><rect x="1090.6" y="150.5" width="7.2" height="2" fill="#8f8a52"/><rect x="1097.8" y="150.5" width="1.2" height="2" fill="#8f8f8b"/><rect x="1100.2" y="150.5" width="2.4" height="2" fill="#a02050"/><rect x="1103.8" y="150.5" width="4.8" height="2" fill="#8f8a52"/><rect x="1055.8" y="153.5" width="2.4" height="2" fill="#8f8f8b"/><rect x="1055.8" y="156.5" width="10.8" height="2" fill="#3a8aa0"/><rect x="1066.6" y="156.5" width="1.2" height="2" fill="#8f8f8b"/><rect x="1069.0" y="156.5" width="1.2" height="2" fill="#8f8f8b"/><rect x="1060.6" y="159.5" width="8.4" height="2" fill="#5f8420"/><rect x="1069.0" y="159.5" width="1.2" height="2" fill="#8f8f8b"/><rect x="1070.2" y="159.5" width="6.0" height="2" fill="#b06a20"/><rect x="1076.2" y="159.5" width="1.2" height="2" fill="#8f8f8b"/><rect x="1078.6" y="159.5" width="4.8" height="2" fill="#b06a20"/><rect x="1083.4" y="159.5" width="1.2" height="2" fill="#8f8f8b"/><rect x="1085.8" y="159.5" width="1.2" height="2" fill="#8f8f8b"/><rect x="1065.4" y="162.5" width="12.0" height="2" fill="#8f8f8b"/><rect x="1078.6" y="162.5" width="1.2" height="2" fill="#a02050"/><rect x="1081.0" y="162.5" width="4.8" height="2" fill="#8f8f8b"/><rect x="1060.6" y="165.5" width="2.4" height="2" fill="#8f8f8b"/><rect x="1060.6" y="168.5" width="6.0" height="2" fill="#5f8420"/><rect x="1066.6" y="168.5" width="1.2" height="2" fill="#8f8f8b"/><rect x="1067.8" y="168.5" width="6.0" height="2" fill="#b06a20"/><rect x="1073.8" y="168.5" width="1.2" height="2" fill="#8f8f8b"/><rect x="1076.2" y="168.5" width="2.4" height="2" fill="#b06a20"/><rect x="1078.6" y="168.5" width="1.2" height="2" fill="#8f8f8b"/><rect x="1081.0" y="168.5" width="1.2" height="2" fill="#8f8f8b"/><rect x="1065.4" y="171.5" width="15.6" height="2" fill="#8f8f8b"/><rect x="1082.2" y="171.5" width="1.2" height="2" fill="#a02050"/><rect x="1084.6" y="171.5" width="2.4" height="2" fill="#8f8f8b"/><rect x="1065.4" y="174.5" width="2.4" height="2" fill="#a02050"/><rect x="1069.0" y="174.5" width="1.2" height="2" fill="#8f8f8b"/><rect x="1070.2" y="174.5" width="8.4" height="2" fill="#8f8a52"/><rect x="1079.8" y="174.5" width="2.4" height="2" fill="#a02050"/><rect x="1083.4" y="174.5" width="3.6" height="2" fill="#8f8f8b"/><rect x="1088.2" y="174.5" width="1.2" height="2" fill="#8f8f8b"/><rect x="1070.2" y="177.5" width="4.8" height="2" fill="#8f8f8b"/><rect x="1075.0" y="177.5" width="16.8" height="2" fill="#5f8420"/><rect x="1091.8" y="177.5" width="1.2" height="2" fill="#8f8f8b"/><rect x="1093.0" y="177.5" width="10.8" height="2" fill="#8f8a52"/><rect x="1103.8" y="177.5" width="1.2" height="2" fill="#8f8f8b"/><rect x="1106.2" y="177.5" width="4.8" height="2" fill="#7558a8"/><rect x="1111.0" y="177.5" width="1.2" height="2" fill="#8f8f8b"/><rect x="1070.2" y="180.5" width="4.8" height="2" fill="#8f8f8b"/><rect x="1075.0" y="180.5" width="16.8" height="2" fill="#5f8420"/><rect x="1091.8" y="180.5" width="1.2" height="2" fill="#8f8f8b"/><rect x="1093.0" y="180.5" width="6.0" height="2" fill="#8f8a52"/><rect x="1099.0" y="180.5" width="1.2" height="2" fill="#8f8f8b"/><rect x="1101.4" y="180.5" width="8.4" height="2" fill="#8f8a52"/><rect x="1109.8" y="180.5" width="1.2" height="2" fill="#8f8f8b"/><rect x="1065.4" y="183.5" width="1.2" height="2" fill="#8f8f8b"/><rect x="1067.8" y="183.5" width="4.8" height="2" fill="#a02050"/><rect x="1073.8" y="183.5" width="1.2" height="2" fill="#8f8f8b"/><rect x="1070.2" y="186.5" width="4.8" height="2" fill="#8f8f8b"/><rect x="1075.0" y="186.5" width="16.8" height="2" fill="#5f8420"/><rect x="1091.8" y="186.5" width="1.2" height="2" fill="#8f8f8b"/><rect x="1093.0" y="186.5" width="10.8" height="2" fill="#8f8a52"/><rect x="1103.8" y="186.5" width="1.2" height="2" fill="#8f8f8b"/><rect x="1106.2" y="186.5" width="6.0" height="2" fill="#7558a8"/><rect x="1112.2" y="186.5" width="1.2" height="2" fill="#8f8f8b"/><rect x="1070.2" y="189.5" width="4.8" height="2" fill="#8f8f8b"/><rect x="1075.0" y="189.5" width="16.8" height="2" fill="#5f8420"/><rect x="1091.8" y="189.5" width="1.2" height="2" fill="#8f8f8b"/><rect x="1093.0" y="189.5" width="6.0" height="2" fill="#8f8a52"/><rect x="1099.0" y="189.5" width="1.2" height="2" fill="#8f8f8b"/><rect x="1101.4" y="189.5" width="8.4" height="2" fill="#8f8a52"/><rect x="1109.8" y="189.5" width="1.2" height="2" fill="#8f8f8b"/><rect x="1065.4" y="192.5" width="1.2" height="2" fill="#8f8f8b"/><rect x="1060.6" y="198.5" width="2.4" height="2" fill="#8f8f8b"/><rect x="1060.6" y="201.5" width="13.2" height="2" fill="#5f8420"/><rect x="1073.8" y="201.5" width="1.2" height="2" fill="#8f8f8b"/><rect x="1075.0" y="201.5" width="6.0" height="2" fill="#b06a20"/><rect x="1081.0" y="201.5" width="1.2" height="2" fill="#8f8f8b"/><rect x="1083.4" y="201.5" width="9.6" height="2" fill="#b06a20"/><rect x="1093.0" y="201.5" width="1.2" height="2" fill="#8f8f8b"/><rect x="1095.4" y="201.5" width="1.2" height="2" fill="#8f8f8b"/><rect x="1065.4" y="204.5" width="16.8" height="2" fill="#8f8f8b"/><rect x="1083.4" y="204.5" width="1.2" height="2" fill="#a02050"/><rect x="1085.8" y="204.5" width="9.6" height="2" fill="#8f8f8b"/><rect x="1060.6" y="207.5" width="2.4" height="2" fill="#8f8f8b"/><rect x="1060.6" y="210.5" width="9.6" height="2" fill="#5f8420"/><rect x="1070.2" y="210.5" width="1.2" height="2" fill="#8f8f8b"/><rect x="1071.4" y="210.5" width="6.0" height="2" fill="#b06a20"/><rect x="1077.4" y="210.5" width="1.2" height="2" fill="#8f8f8b"/><rect x="1079.8" y="210.5" width="6.0" height="2" fill="#b06a20"/><rect x="1085.8" y="210.5" width="1.2" height="2" fill="#8f8f8b"/><rect x="1088.2" y="210.5" width="1.2" height="2" fill="#8f8f8b"/><rect x="1065.4" y="213.5" width="13.2" height="2" fill="#8f8f8b"/><rect x="1079.8" y="213.5" width="1.2" height="2" fill="#a02050"/><rect x="1082.2" y="213.5" width="6.0" height="2" fill="#8f8f8b"/><rect x="1060.6" y="216.5" width="2.4" height="2" fill="#8f8f8b"/><rect x="1060.6" y="219.5" width="7.2" height="2" fill="#5f8420"/><rect x="1067.8" y="219.5" width="1.2" height="2" fill="#8f8f8b"/><rect x="1069.0" y="219.5" width="6.0" height="2" fill="#b06a20"/><rect x="1075.0" y="219.5" width="1.2" height="2" fill="#8f8f8b"/><rect x="1077.4" y="219.5" width="1.2" height="2" fill="#8f8f8b"/><rect x="1065.4" y="222.5" width="13.2" height="2" fill="#8f8f8b"/><rect x="1079.8" y="222.5" width="1.2" height="2" fill="#a02050"/><rect x="1082.2" y="222.5" width="4.8" height="2" fill="#7558a8"/><rect x="1060.6" y="228.5" width="2.4" height="2" fill="#8f8f8b"/><rect x="1060.6" y="231.5" width="6.0" height="2" fill="#5f8420"/><rect x="1066.6" y="231.5" width="1.2" height="2" fill="#8f8f8b"/><rect x="1067.8" y="231.5" width="6.0" height="2" fill="#b06a20"/><rect x="1073.8" y="231.5" width="1.2" height="2" fill="#8f8f8b"/><rect x="1076.2" y="231.5" width="6.0" height="2" fill="#b06a20"/><rect x="1082.2" y="231.5" width="1.2" height="2" fill="#8f8f8b"/><rect x="1084.6" y="231.5" width="1.2" height="2" fill="#8f8f8b"/><rect x="1065.4" y="237.5" width="16.8" height="2" fill="#8f8f8b"/><rect x="1083.4" y="237.5" width="1.2" height="2" fill="#a02050"/><rect x="1085.8" y="237.5" width="4.8" height="2" fill="#7558a8"/><rect x="1065.4" y="240.5" width="13.2" height="2" fill="#8f8f8b"/><rect x="1079.8" y="240.5" width="1.2" height="2" fill="#a02050"/><rect x="1082.2" y="240.5" width="6.0" height="2" fill="#8f8f8b"/><rect x="1065.4" y="243.5" width="4.8" height="2" fill="#8f8f8b"/><rect x="1070.2" y="243.5" width="16.8" height="2" fill="#5f8420"/><rect x="1087.0" y="243.5" width="1.2" height="2" fill="#8f8f8b"/><rect x="1088.2" y="243.5" width="8.4" height="2" fill="#8f8a52"/><rect x="1096.6" y="243.5" width="1.2" height="2" fill="#8f8f8b"/><rect x="1099.0" y="243.5" width="7.2" height="2" fill="#8f8f8b"/><rect x="1060.6" y="246.5" width="2.4" height="2" fill="#8f8f8b"/><rect x="1060.6" y="249.5" width="7.2" height="2" fill="#5f8420"/><rect x="1067.8" y="249.5" width="1.2" height="2" fill="#8f8f8b"/><rect x="1069.0" y="249.5" width="6.0" height="2" fill="#b06a20"/><rect x="1075.0" y="249.5" width="1.2" height="2" fill="#8f8f8b"/><rect x="1077.4" y="249.5" width="3.6" height="2" fill="#b06a20"/><rect x="1081.0" y="249.5" width="1.2" height="2" fill="#8f8f8b"/><rect x="1083.4" y="249.5" width="1.2" height="2" fill="#8f8f8b"/><rect x="1065.4" y="252.5" width="16.8" height="2" fill="#8f8f8b"/><rect x="1083.4" y="252.5" width="1.2" height="2" fill="#a02050"/><rect x="1085.8" y="252.5" width="3.6" height="2" fill="#8f8f8b"/><rect x="1065.4" y="255.5" width="10.8" height="2" fill="#8f8f8b"/><rect x="1077.4" y="255.5" width="1.2" height="2" fill="#a02050"/><rect x="1079.8" y="255.5" width="4.8" height="2" fill="#8f8a52"/><rect x="1065.4" y="258.5" width="4.8" height="2" fill="#8f8f8b"/><rect x="1070.2" y="258.5" width="16.8" height="2" fill="#5f8420"/><rect x="1087.0" y="258.5" width="1.2" height="2" fill="#8f8f8b"/><rect x="1088.2" y="258.5" width="12.0" height="2" fill="#8f8a52"/><rect x="1100.2" y="258.5" width="1.2" height="2" fill="#8f8f8b"/><rect x="1102.6" y="258.5" width="4.8" height="2" fill="#8f8f8b"/><rect x="1065.4" y="261.5" width="4.8" height="2" fill="#8f8f8b"/><rect x="1070.2" y="261.5" width="16.8" height="2" fill="#5f8420"/><rect x="1087.0" y="261.5" width="1.2" height="2" fill="#8f8f8b"/><rect x="1088.2" y="261.5" width="15.6" height="2" fill="#8f8a52"/><rect x="1103.8" y="261.5" width="1.2" height="2" fill="#8f8f8b"/><rect x="1106.2" y="261.5" width="1.2" height="2" fill="#7558a8"/><rect x="1107.4" y="261.5" width="1.2" height="2" fill="#8f8f8b"/><rect x="1065.4" y="264.5" width="20.4" height="2" fill="#8f8f8b"/><rect x="1087.0" y="264.5" width="1.2" height="2" fill="#a02050"/><rect x="1089.4" y="264.5" width="1.2" height="2" fill="#7558a8"/><rect x="1060.6" y="267.5" width="2.4" height="2" fill="#8f8f8b"/><rect x="1060.6" y="270.5" width="9.6" height="2" fill="#5f8420"/><rect x="1070.2" y="270.5" width="1.2" height="2" fill="#8f8f8b"/><rect x="1071.4" y="270.5" width="6.0" height="2" fill="#b06a20"/><rect x="1077.4" y="270.5" width="1.2" height="2" fill="#8f8f8b"/><rect x="1079.8" y="270.5" width="6.0" height="2" fill="#b06a20"/><rect x="1085.8" y="270.5" width="1.2" height="2" fill="#8f8f8b"/><rect x="1088.2" y="270.5" width="1.2" height="2" fill="#8f8f8b"/><rect x="1065.4" y="273.5" width="13.2" height="2" fill="#8f8f8b"/><rect x="1079.8" y="273.5" width="1.2" height="2" fill="#a02050"/><rect x="1082.2" y="273.5" width="6.0" height="2" fill="#8f8f8b"/><rect x="1065.4" y="276.5" width="4.8" height="2" fill="#8f8f8b"/><rect x="1070.2" y="276.5" width="16.8" height="2" fill="#5f8420"/><rect x="1087.0" y="276.5" width="1.2" height="2" fill="#8f8f8b"/><rect x="1088.2" y="276.5" width="8.4" height="2" fill="#8f8a52"/><rect x="1096.6" y="276.5" width="1.2" height="2" fill="#8f8f8b"/><rect x="1099.0" y="276.5" width="4.8" height="2" fill="#3a8aa0"/><rect x="1103.8" y="276.5" width="1.2" height="2" fill="#8f8f8b"/><rect x="1105.0" y="276.5" width="10.8" height="2" fill="#5f8420"/><rect x="1115.8" y="276.5" width="9.6" height="2" fill="#8f8f8b"/><rect x="1060.6" y="279.5" width="2.4" height="2" fill="#8f8f8b"/><rect x="1060.6" y="282.5" width="10.8" height="2" fill="#5f8420"/><rect x="1071.4" y="282.5" width="1.2" height="2" fill="#8f8f8b"/><rect x="1072.6" y="282.5" width="6.0" height="2" fill="#b06a20"/><rect x="1078.6" y="282.5" width="1.2" height="2" fill="#8f8f8b"/><rect x="1081.0" y="282.5" width="6.0" height="2" fill="#b06a20"/><rect x="1087.0" y="282.5" width="1.2" height="2" fill="#8f8f8b"/><rect x="1089.4" y="282.5" width="1.2" height="2" fill="#8f8f8b"/><rect x="1065.4" y="285.5" width="20.4" height="2" fill="#8f8f8b"/><rect x="1087.0" y="285.5" width="1.2" height="2" fill="#a02050"/><rect x="1089.4" y="285.5" width="6.0" height="2" fill="#8f8f8b"/><rect x="1060.6" y="291.5" width="2.4" height="2" fill="#8f8f8b"/><rect x="1060.6" y="294.5" width="9.6" height="2" fill="#5f8420"/><rect x="1070.2" y="294.5" width="1.2" height="2" fill="#8f8f8b"/><rect x="1071.4" y="294.5" width="6.0" height="2" fill="#b06a20"/><rect x="1077.4" y="294.5" width="1.2" height="2" fill="#8f8f8b"/><rect x="1079.8" y="294.5" width="1.2" height="2" fill="#8f8f8b"/><rect x="1065.4" y="297.5" width="3.6" height="2" fill="#3a8aa0"/><rect x="1070.2" y="297.5" width="6.0" height="2" fill="#8f8f8b"/><rect x="1077.4" y="297.5" width="1.2" height="2" fill="#a02050"/><rect x="1079.8" y="297.5" width="4.8" height="2" fill="#8f8f8b"/><rect x="1084.6" y="297.5" width="16.8" height="2" fill="#5f8420"/><rect x="1101.4" y="297.5" width="1.2" height="2" fill="#8f8f8b"/><rect x="1102.6" y="297.5" width="13.2" height="2" fill="#8f8a52"/><rect x="1115.8" y="297.5" width="1.2" height="2" fill="#8f8f8b"/><rect x="1065.4" y="300.5" width="2.4" height="2" fill="#a02050"/><rect x="1069.0" y="300.5" width="8.4" height="2" fill="#8f8f8b"/><rect x="1078.6" y="300.5" width="1.2" height="2" fill="#8f8f8b"/><rect x="1070.2" y="303.5" width="13.2" height="2" fill="#8f8f8b"/><rect x="1084.6" y="303.5" width="1.2" height="2" fill="#a02050"/><rect x="1087.0" y="303.5" width="4.8" height="2" fill="#3a8aa0"/><rect x="1091.8" y="303.5" width="1.2" height="2" fill="#8f8f8b"/><rect x="1093.0" y="303.5" width="6.0" height="2" fill="#5f8420"/><rect x="1099.0" y="303.5" width="8.4" height="2" fill="#8f8f8b"/><rect x="1070.2" y="306.5" width="16.8" height="2" fill="#8f8f8b"/><rect x="1088.2" y="306.5" width="1.2" height="2" fill="#a02050"/><rect x="1090.6" y="306.5" width="4.8" height="2" fill="#7558a8"/><rect x="1065.4" y="309.5" width="1.2" height="2" fill="#8f8f8b"/><rect x="1060.6" y="312.5" width="1.2" height="2" fill="#8f8f8b"/><rect x="1055.8" y="321.5" width="2.4" height="2" fill="#8f8f8b"/><rect x="1055.8" y="324.5" width="9.6" height="2" fill="#8f8f8b"/><rect x="1066.6" y="324.5" width="1.2" height="2" fill="#8f8f8b"/><rect x="1060.6" y="327.5" width="12.0" height="2" fill="#5f8420"/><rect x="1072.6" y="327.5" width="2.4" height="2" fill="#8f8f8b"/><rect x="1065.4" y="330.5" width="7.2" height="2" fill="#8f8f8b"/><rect x="1065.4" y="333.5" width="9.6" height="2" fill="#8f8f8b"/><rect x="1060.6" y="336.5" width="2.4" height="2" fill="#8f8f8b"/><rect x="1064.2" y="336.5" width="1.2" height="2" fill="#8f8f8b"/><rect x="1065.4" y="342.5" width="6.0" height="2" fill="#3a8aa0"/><rect x="1072.6" y="342.5" width="7.2" height="2" fill="#8f8f8b"/><rect x="1081.0" y="342.5" width="1.2" height="2" fill="#a02050"/><rect x="1083.4" y="342.5" width="2.4" height="2" fill="#5f8420"/><rect x="1085.8" y="342.5" width="15.6" height="2" fill="#8f8f8b"/><rect x="1102.6" y="342.5" width="1.2" height="2" fill="#8f8f8b"/><rect x="1105.0" y="342.5" width="18.0" height="2" fill="#8f8a52"/><rect x="1123.0" y="342.5" width="1.2" height="2" fill="#8f8f8b"/><rect x="1125.4" y="342.5" width="3.6" height="2" fill="#8f8f8b"/><rect x="1070.2" y="345.5" width="7.2" height="2" fill="#8f8f8b"/><rect x="1078.6" y="345.5" width="3.6" height="2" fill="#8f8f8b"/><rect x="1070.2" y="348.5" width="13.2" height="2" fill="#8f8f8b"/><rect x="1084.6" y="348.5" width="1.2" height="2" fill="#8f8f8b"/><rect x="1085.8" y="348.5" width="13.2" height="2" fill="#8f8a52"/><rect x="1099.0" y="348.5" width="1.2" height="2" fill="#8f8f8b"/><rect x="1101.4" y="348.5" width="10.8" height="2" fill="#8f8a52"/><rect x="1112.2" y="348.5" width="2.4" height="2" fill="#8f8f8b"/><rect x="1070.2" y="351.5" width="9.6" height="2" fill="#8f8f8b"/><rect x="1081.0" y="351.5" width="4.8" height="2" fill="#7558a8"/><rect x="1085.8" y="351.5" width="1.2" height="2" fill="#8f8f8b"/><rect x="1070.2" y="354.5" width="12.0" height="2" fill="#8f8f8b"/><rect x="1083.4" y="354.5" width="4.8" height="2" fill="#7558a8"/><rect x="1065.4" y="360.5" width="2.4" height="2" fill="#8f8f8b"/><rect x="1065.4" y="375.5" width="8.4" height="2" fill="#8f8f8b"/><rect x="1073.8" y="375.5" width="2.4" height="2" fill="#5f8420"/><rect x="1076.2" y="375.5" width="1.2" height="2" fill="#8f8f8b"/><rect x="1077.4" y="375.5" width="10.8" height="2" fill="#8f8a52"/><rect x="1088.2" y="375.5" width="1.2" height="2" fill="#8f8f8b"/><rect x="1090.6" y="375.5" width="2.4" height="2" fill="#8f8f8b"/><rect x="1094.2" y="375.5" width="2.4" height="2" fill="#a02050"/><rect x="1097.8" y="375.5" width="1.2" height="2" fill="#8f8f8b"/><rect x="1070.2" y="378.5" width="8.4" height="2" fill="#3a8aa0"/><rect x="1078.6" y="378.5" width="1.2" height="2" fill="#8f8f8b"/><rect x="1079.8" y="378.5" width="3.6" height="2" fill="#5f8420"/><rect x="1083.4" y="378.5" width="1.2" height="2" fill="#8f8f8b"/><rect x="1084.6" y="378.5" width="8.4" height="2" fill="#8f8a52"/><rect x="1094.2" y="378.5" width="3.6" height="2" fill="#8f8a52"/><rect x="1097.8" y="378.5" width="1.2" height="2" fill="#8f8f8b"/><rect x="1070.2" y="381.5" width="14.4" height="2" fill="#8f8f8b"/><rect x="1085.8" y="381.5" width="1.2" height="2" fill="#a02050"/><rect x="1088.2" y="381.5" width="7.2" height="2" fill="#8f8f8b"/><rect x="1070.2" y="384.5" width="3.6" height="2" fill="#3a8aa0"/><rect x="1075.0" y="384.5" width="2.4" height="2" fill="#8f8f8b"/><rect x="1075.0" y="387.5" width="1.2" height="2" fill="#8f8f8b"/><rect x="1070.2" y="390.5" width="1.2" height="2" fill="#8f8f8b"/><rect x="1072.6" y="390.5" width="1.2" height="2" fill="#a02050"/><rect x="1075.0" y="390.5" width="6.0" height="2" fill="#8f8f8b"/><rect x="1065.4" y="399.5" width="2.4" height="2" fill="#8f8f8b"/><rect x="1065.4" y="405.5" width="8.4" height="2" fill="#8f8f8b"/><rect x="1073.8" y="405.5" width="2.4" height="2" fill="#5f8420"/><rect x="1076.2" y="405.5" width="1.2" height="2" fill="#8f8f8b"/><rect x="1077.4" y="405.5" width="8.4" height="2" fill="#8f8a52"/><rect x="1085.8" y="405.5" width="1.2" height="2" fill="#8f8f8b"/><rect x="1088.2" y="405.5" width="2.4" height="2" fill="#8f8f8b"/><rect x="1091.8" y="405.5" width="2.4" height="2" fill="#a02050"/><rect x="1095.4" y="405.5" width="1.2" height="2" fill="#8f8f8b"/><rect x="1070.2" y="408.5" width="14.4" height="2" fill="#8f8f8b"/><rect x="1085.8" y="408.5" width="1.2" height="2" fill="#a02050"/><rect x="1088.2" y="408.5" width="4.8" height="2" fill="#7558a8"/><rect x="1070.2" y="411.5" width="8.4" height="2" fill="#3a8aa0"/><rect x="1078.6" y="411.5" width="1.2" height="2" fill="#8f8f8b"/><rect x="1079.8" y="411.5" width="3.6" height="2" fill="#5f8420"/><rect x="1083.4" y="411.5" width="1.2" height="2" fill="#8f8f8b"/><rect x="1084.6" y="411.5" width="8.4" height="2" fill="#8f8a52"/><rect x="1093.0" y="411.5" width="1.2" height="2" fill="#8f8f8b"/><rect x="1065.4" y="414.5" width="2.4" height="2" fill="#8f8f8b"/><rect x="1065.4" y="417.5" width="8.4" height="2" fill="#8f8f8b"/><rect x="1073.8" y="417.5" width="2.4" height="2" fill="#5f8420"/><rect x="1076.2" y="417.5" width="1.2" height="2" fill="#8f8f8b"/><rect x="1077.4" y="417.5" width="8.4" height="2" fill="#8f8a52"/><rect x="1085.8" y="417.5" width="1.2" height="2" fill="#8f8f8b"/><rect x="1088.2" y="417.5" width="2.4" height="2" fill="#8f8f8b"/><rect x="1091.8" y="417.5" width="2.4" height="2" fill="#a02050"/><rect x="1095.4" y="417.5" width="1.2" height="2" fill="#8f8f8b"/><rect x="1070.2" y="420.5" width="14.4" height="2" fill="#8f8f8b"/><rect x="1085.8" y="420.5" width="1.2" height="2" fill="#a02050"/><rect x="1088.2" y="420.5" width="4.8" height="2" fill="#7558a8"/><rect x="1070.2" y="423.5" width="8.4" height="2" fill="#3a8aa0"/><rect x="1078.6" y="423.5" width="1.2" height="2" fill="#8f8f8b"/><rect x="1079.8" y="423.5" width="3.6" height="2" fill="#5f8420"/><rect x="1083.4" y="423.5" width="1.2" height="2" fill="#8f8f8b"/><rect x="1084.6" y="423.5" width="8.4" height="2" fill="#8f8a52"/><rect x="1093.0" y="423.5" width="1.2" height="2" fill="#8f8f8b"/><rect x="1065.4" y="426.5" width="2.4" height="2" fill="#8f8f8b"/><rect x="1060.6" y="429.5" width="1.2" height="2" fill="#8f8f8b"/><rect x="1055.8" y="432.5" width="1.2" height="2" fill="#8f8f8b"/><rect x="1051.0" y="435.5" width="2.4" height="2" fill="#8f8f8b"/></svg>
<div style="position:absolute;left:1125px;top:96px;width:8px;height:147px;background:#8b8b8b;"></div>
<!-- sec_4_browser.py -->
<div style="position:absolute;left:1245px;top:88.5px;width:274px;height:2px;background:#272822;"></div>
<div style="position:absolute;left:1134px;top:60px;width:110px;height:30px;background:#272822;"></div>
<div style="position:absolute;left:1244px;top:60px;width:1px;height:30px;background:#191a17;"></div>
<div class="t " style="left:1145px;top:68.8px;font-size:12.5px;height:12.5px;color:#d8d8d4;;letter-spacing:0.253px;">Web浏览器</div>
<svg style="left:1221px;top:70px" width="10" height="10" viewBox="0 0 10 10"><path d="M0.700 0.700L9.300 9.300M9.300 0.700L0.700 9.300" stroke="#e0e0dc" stroke-width="1.1"/></svg>
<div style="position:absolute;left:1140px;top:95px;width:372px;height:27px;border:1px solid #6b6c66;background:#272822;overflow:hidden"><div class="t" style="left:8.200px;top:6px;font-size:13.500px;height:14px;line-height:14px;color:#d4d4d0;letter-spacing:-0.050px;width:357.500px;overflow:hidden">http://localhost:8000/#/pages/news/financialApplication/financialApplication</div></div>
<div style="position:absolute;left:1140px;top:127px;width:120px;height:27px;border:1px solid #16173a;background:#272822"></div>
<div class="t " style="left:1146px;top:133.8px;font-size:13.5px;height:13.5px;color:#d4d4d0;;letter-spacing:-0.412px;">iPhone X</div>
<svg style="left:1247px;top:137px" width="8" height="5" viewBox="0 0 8 5"><path d="M0.500 0.300H7.500L4 4.600Z" fill="#e4e4e0"/></svg>
<svg style="left:1271.0px;top:132.5px" width="15" height="15" viewBox="0 0 15 15" fill="none" stroke="#e4e4e0" stroke-width="1.2"><path d="M6.500 2.800H14V13H1.700V8"/><path d="M1.300 1.800L8.800 9M1.300 5.300V1.800H4.800"/></svg>
<svg style="left:1301.0px;top:132.5px" width="15" height="15" viewBox="0 0 15 15" fill="none" stroke="#e4e4e0" stroke-width="1.2"><path d="M13.85 7.50 L12.91 8.95 L11.70 9.92 L11.46 11.46 L10.68 13.00 L8.95 12.91 L7.50 12.35 L6.05 12.91 L4.33 13.00 L3.54 11.46 L3.30 9.92 L2.09 8.95 L1.15 7.50 L2.09 6.05 L3.30 5.07 L3.54 3.54 L4.32 2.00 L6.05 2.09 L7.50 2.65 L8.95 2.09 L10.68 2.00 L11.46 3.54 L11.70 5.07 L12.91 6.05Z" stroke-linejoin="round"/><circle cx="7.500" cy="7.500" r="1.900"/></svg>
<svg style="left:1331.2px;top:132.5px" width="15" height="15" viewBox="0 0 15 15" fill="none" stroke="#e4e4e0" stroke-width="1.2"><rect x="0.700" y="1.700" width="14.200" height="11.700"/><path d="M3.900 4.800L6.700 7.200L3.900 9.600M8.600 9.700H11.800"/></svg>
<svg style="left:1361.2px;top:132.5px" width="15" height="15" viewBox="0 0 15 15" fill="none" stroke="#e4e4e0" stroke-width="1.2"><path d="M1.300 7.500H13.900M6.100 2.800L1.100 7.500L6.100 12.500" stroke-width="1.900"/></svg>
<svg style="left:1390.9px;top:132.5px" width="15" height="15" viewBox="0 0 15 15" fill="none" stroke="#e4e4e0" stroke-width="1.2"><path d="M1.100 7.500H13.700M8.900 2.800L13.900 7.500L8.900 12.500" stroke="#a2a29e" stroke-width="1.900"/></svg>
<svg style="left:1421.3px;top:132.5px" width="15" height="15" viewBox="0 0 15 15" fill="none" stroke="#e4e4e0" stroke-width="1.2"><path d="M10.700 4.100A5.300 5.300 0 1 0 10.600 11.800"/><path d="M9 5.400L13.800 6.400L13.300 1.900Z" fill="#e4e4e0" stroke="none"/></svg>
<svg style="left:1450.8px;top:132.5px" width="15" height="15" viewBox="0 0 15 15" fill="none" stroke="#e4e4e0" stroke-width="1.2"><rect x="3.200" y="7" width="8.700" height="6"/><path d="M4.700 7V5A2.800 2.800 0 0 1 10.300 4.800"/></svg>
<svg style="left:1481.0px;top:132.5px" width="15" height="15" viewBox="0 0 15 15" fill="none" stroke="#e4e4e0" stroke-width="1.2"><rect x="2.300" y="2.200" width="4.300" height="4.300"/><rect x="8.300" y="2.200" width="4.300" height="4.300"/><rect x="2.300" y="8.200" width="4.300" height="4.300"/><path d="M8.300 8.200V9.700M8.300 11.200V12.700M10.300 8.500H12.600V10.200M10.300 12.500H12.600"/></svg>
<div style="position:absolute;left:1134px;top:160px;width:385px;height:1px;background:#1a1b18;"></div>
<div style="position:absolute;left:1139px;top:165px;width:375px;height:812px;background:#ffffff;"></div>
<svg style="left:1152px;top:177px" width="12" height="17" viewBox="0 0 12 17" fill="none" stroke="#333" stroke-width="1.300"><path d="M10.500 0.500L1.500 8.300L10.500 16.300"/></svg>
<div class="t " style="left:1311px;top:179.6px;font-size:16px;height:16px;color:#111;font-family:'Liberation Sans','Noto Sans CJK TC','Noto Sans CJK SC',sans-serif;font-weight:bold;letter-spacing:0.242px;">申請</div>
<div class="t " style="left:1243.5px;top:228.7px;font-size:18px;height:18px;color:#333;font-family:'Liberation Sans','Noto Sans CJK TC','Noto Sans CJK SC',sans-serif;;letter-spacing:0.650px;">测试</div>
<div class="t " style="left:1244.5px;top:265.0px;font-size:16px;height:16px;color:#333;font-family:'Liberation Sans','Noto Sans CJK TC','Noto Sans CJK SC',sans-serif;;letter-spacing:-0.260px;">USD</div>
<div style="position:absolute;left:1288px;top:261px;width:67px;height:24px;border-radius:6.500px;background:#0a6aff"></div>
<div class="t " style="left:1298.5px;top:267.3px;font-size:13px;height:13px;color:#fff;font-family:'Liberation Sans','Noto Sans CJK TC','Noto Sans CJK SC',sans-serif;-webkit-text-stroke:0.250px #fff;letter-spacing:0.484px;">10.00%</div>
<div class="t " style="left:1229px;top:328.4px;font-size:16px;height:16px;color:#1c1c1c;font-family:'Liberation Sans','Noto Sans CJK TC','Noto Sans CJK SC',sans-serif;;letter-spacing:0.121px;">礦機租金</div>
<div class="t " style="left:1375.5px;top:325.0px;font-size:16px;height:16px;color:#1c1c1c;font-family:'Liberation Sans','Noto Sans CJK TC','Noto Sans CJK SC',sans-serif;;letter-spacing:0.010px;">200.00</div>
<div class="t " style="left:1229px;top:381.9px;font-size:16px;height:16px;color:#1c1c1c;font-family:'Liberation Sans','Noto Sans CJK TC','Noto Sans CJK SC',sans-serif;;letter-spacing:0.121px;">挖礦期限</div>
<div class="t " style="left:1415px;top:378.3px;font-size:16px;height:16px;color:#1c1c1c;font-family:'Liberation Sans','Noto Sans CJK TC','Noto Sans CJK SC',sans-serif;;letter-spacing:0.594px;">3</div>
<div class="t " style="left:1229px;top:435.0px;font-size:16px;height:16px;color:#1c1c1c;font-family:'Liberation Sans','Noto Sans CJK TC','Noto Sans CJK SC',sans-serif;;letter-spacing:0.121px;">最大申購</div>
<div class="t " style="left:1367px;top:431.3px;font-size:16px;height:16px;color:#1c1c1c;font-family:'Liberation Sans','Noto Sans CJK TC','Noto Sans CJK SC',sans-serif;;letter-spacing:-0.049px;">1000.00</div>
<div style="position:absolute;left:1229px;top:360px;width:195px;height:1px;background:#ececec;"></div>
<div style="position:absolute;left:1229px;top:413px;width:195px;height:1px;background:#ececec;"></div>
<div style="position:absolute;left:1229px;top:466px;width:195px;height:1px;background:#ececec;"></div>
<div style="position:absolute;left:1229px;top:519px;width:195px;height:1px;background:#ececec;"></div>
<div class="t " style="left:1229px;top:487.8px;font-size:16px;height:16px;color:#8c8c8c;font-family:'Liberation Sans','Noto Sans CJK TC','Noto Sans CJK SC',sans-serif;;letter-spacing:0.069px;">請輸入鎖倉數量</div>
<div style="position:absolute;left:1231px;top:539.500px;width:191px;height:44px;border-radius:22px;background:#0265ff"></div>
<div class="t " style="left:1313.3px;top:553.0px;font-size:14px;height:14px;color:#fff;font-family:'Liberation Sans','Noto Sans CJK TC','Noto Sans CJK SC',sans-serif;;letter-spacing:0.000px;">申購</div>
<div class="t " style="left:1229px;top:608.8px;font-size:16px;height:16px;color:#1c1c1c;font-family:'Liberation Sans','Noto Sans CJK TC','Noto Sans CJK SC',sans-serif;;letter-spacing:-0.004px;">產品介紹</div>
<div class="t " style="left:1229px;top:629.8px;font-size:16px;height:16px;color:#1c1c1c;font-family:'Liberation Sans','Noto Sans CJK TC','Noto Sans CJK SC',sans-serif;;letter-spacing:0.242px;">测试</div>
<!-- sec_5_console.py -->
<div class="t " style="left:23px;top:807.8px;font-size:13.5px;height:13.5px;color:#f0f0ec;;letter-spacing:0.193px;">st5_lcai - Web</div>
<div style="position:absolute;left:18px;top:828px;width:117px;height:1px;background:#d8d8d4;"></div>
<svg style="left:953.5px;top:806.5px" width="15" height="15" viewBox="0 0 15 15" fill="none" stroke="#c4c4c0" stroke-width="1.100"><path d="M4 5.300A3.900 4.800 0 0 1 11.800 5.300V9A3.900 4.400 0 0 1 4 9Z"/><path d="M4 4.800H11.800M7.900 4.800V13.300M3.800 6L1.800 4.500M3.800 8.300H1.300M3.800 10.500L1.800 12.300M12 6L14 4.500M12 8.300H14.500M12 10.500L14 12.300" stroke-width="1"/></svg>
<svg style="left:983.5px;top:806.5px" width="15" height="15" viewBox="0 0 15 15" fill="none" stroke="#c4c4c0" stroke-width="1.100"><path d="M4.300 3.300A5.700 5.700 0 1 1 3 7.800"/><path d="M2.300 1.500L4.500 3.500L1.800 4.800" stroke-width="1"/><path d="M6.700 4.900L11.800 7.400L6.700 9.900Z" fill="#c4c4c0" stroke="none"/></svg>
<svg style="left:1014.5px;top:806.5px" width="15" height="15" viewBox="0 0 15 15" fill="none" stroke="#c4c4c0" stroke-width="1.100"><rect x="1.600" y="1.900" width="11.800" height="12.200"/><rect x="3.700" y="3.900" width="7.800" height="8.200" fill="#d8d8d4" stroke="none"/></svg>
<svg style="left:1044.5px;top:806.5px" width="15" height="15" viewBox="0 0 15 15" fill="none" stroke="#c4c4c0" stroke-width="1.100"><path d="M8.800 1.900H0.700V13.700H13.900V7.300"/><path d="M3.300 5.500L6.300 8L3.300 10.300M7.500 10.800H10.800M11.800 0.800V5.800M9.300 3.300H14.300"/></svg>
<svg style="left:1074.5px;top:806.5px" width="15" height="15" viewBox="0 0 15 15" fill="none" stroke="#c4c4c0" stroke-width="1.100"><path d="M0.800 11.200L7.600 4.500L14.400 11.200" stroke-width="1.300"/></svg>
<svg style="left:1103.0px;top:806.5px" width="18" height="15" viewBox="0 0 18 15" fill="none" stroke="#c4c4c0" stroke-width="1.100"><path d="M2 3L10 11.500M10 3L2 11.500M13.500 3V11.800M11 9.300L13.500 11.800L16 9.300" stroke-width="1.250"/></svg>
<div class="t mono" style="left:32px;top:848px;font-size:15px;height:18px;line-height:18px;color:#e4e4e0"><span style="position:static;color:#41b2ea;text-decoration:underline">request.js:14</span></div>
<div class="t mono" style="left:32px;top:868px;font-size:15px;height:18px;line-height:18px;color:#e4e4e0"><span style="position:static;color:#a4a4a0">20:02:47.115 </span>:::::::::::::::::::::::::::::::::::::::::::::::::::::::: <span style="position:static;color:#41b2ea;text-decoration:underline">at common/request.js:106</span></div>
<div class="t mono" style="left:32px;top:888px;font-size:15px;height:18px;line-height:18px;color:#e4e4e0"><span style="position:static;color:#a4a4a0">20:02:47.122 </span><span style="position:static;color:#41b2ea;text-decoration:underline">https://st5.amspay.cc/api/v1/project/info</span> <span style="position:static;color:#41b2ea;text-decoration:underline">at common/request.js:107</span></div>
<div class="t mono" style="left:32px;top:908px;font-size:15px;height:18px;line-height:18px;color:#e4e4e0"><span style="position:static;color:#a4a4a0">20:02:47.122 </span>:::::::::::::::::::::::::::::::::::::::::::::::::::::::: <span style="position:static;color:#41b2ea;text-decoration:underline">at common/request.js:108</span></div>
<div class="t mono" style="left:32px;top:928px;font-size:15px;height:18px;line-height:18px;color:#e4e4e0"><span style="position:static;color:#a4a4a0">20:02:47.130 </span>{url: &quot;<span style="position:static;color:#41b2ea;text-decoration:underline">https://st5.amspay.cc/api/v1/project/info</span>&quot;, data: { <span style="position:static;color:#41b2ea;text-decoration:underline">...</span> }, method: <span style="position:static;color:#dcd488">&quot;GET&quot;</span>, header: { <span style="position:static;color:#41b2ea;text-decoration:underline">...</span> }} <span style="position:static;color:#41b2ea;text-decoration:underline">at common</span></div>
<div class="t mono" style="left:32px;top:948px;font-size:15px;height:18px;line-height:18px;color:#e4e4e0"><span style="position:static;color:#41b2ea;text-decoration:underline">/request.js:14</span></div>
<div style="position:absolute;left:1125px;top:965px;width:8px;height:17px;background:#2c2d28;"></div>
<!-- sec_6_status.py -->
<svg style="left:28px;top:987px" width="15" height="15" viewBox="0 0 15 15"><circle cx="7.500" cy="7.500" r="6.500" fill="none" stroke="#b4b4b4" stroke-width="1.300"/><ellipse cx="7.500" cy="5.600" rx="2.500" ry="2.900" fill="#b4b4b4"/><path d="M2.300 11.300C3.500 9.500 6 9.800 6.500 8H8.500C9 9.800 11.500 9.500 12.700 11.300A6.500 6.500 0 0 1 2.300 11.300Z" fill="#b4b4b4"/></svg>
<div class="t " style="left:49px;top:989.0px;font-size:12.5px;height:12.5px;color:#e0e0dc;;letter-spacing:0.248px;">1735031199@qq.com</div>
<svg style="left:235px;top:988px" width="12" height="12" viewBox="0 0 12 12" fill="none" stroke="#d4d4d0" stroke-width="1.100"><path d="M0 1.500H2M4 1.500H12M0 6H2M4 6H12M0 10.500H2M4 10.500H12"/></svg>
<svg style="left:260px;top:988px" width="13" height="12" viewBox="0 0 13 12" fill="none" stroke="#d4d4d0" stroke-width="1.100"><rect x="0.600" y="0.600" width="11.800" height="10.800"/><path d="M3 3.500L5.300 5.800L3 8M6.500 8.500H9.500"/></svg>
<div class="t " style="left:1104px;top:989.3px;font-size:12px;height:12px;color:#e0e0dc;;letter-spacing:0.097px;">语法提示库</div>
<div class="t " style="left:1190px;top:989.3px;font-size:12px;height:12px;color:#e0e0dc;;letter-spacing:0.203px;">行:83</div>
<div class="t " style="left:1229px;top:989.3px;font-size:12px;height:12px;color:#e0e0dc;;letter-spacing:0.203px;">列:39</div>
<div class="t " style="left:1284px;top:989.0px;font-size:12.5px;height:12.5px;color:#e0e0dc;;letter-spacing:-0.184px;">UTF-8</div>
<div class="t " style="left:1344px;top:989.0px;font-size:12.5px;height:12.5px;color:#e0e0dc;;letter-spacing:0.014px;">JavaScript</div>
<svg style="left:1421px;top:988.200px" width="16" height="15" viewBox="0 0 16 15"><path d="M7.500 1A6.500 6 0 1 0 10 12.500L14.500 14L13 10.500A6.500 6 0 0 0 7.500 1Z" fill="#f0f0f0"/><path d="M5 4.500V8.500H10V4.500" fill="none" stroke="#525252" stroke-width="1.500"/></svg>
<svg style="left:1449px;top:985px" width="16" height="16" viewBox="0 0 16 16"><circle cx="8" cy="8" r="7.800" fill="#ffffff"/><path d="M8 3.500V11.500M4.800 8.300L8 11.500L11.200 8.300" fill="none" stroke="#525252" stroke-width="1.500"/></svg>
<svg style="left:1479px;top:986px" width="14" height="14" viewBox="0 0 14 14"><path d="M7 0.500C9.800 1 10.800 3 10.800 5.500V8L13.300 10.300V11H0.700V10.300L3.200 8V5.500C3.200 3 4.200 1 7 0.500Z" fill="#b0a57f"/><path d="M4.800 12H9.200L7 13.800Z" fill="#b0a57f"/></svg>
</div></div>
</body></html>
